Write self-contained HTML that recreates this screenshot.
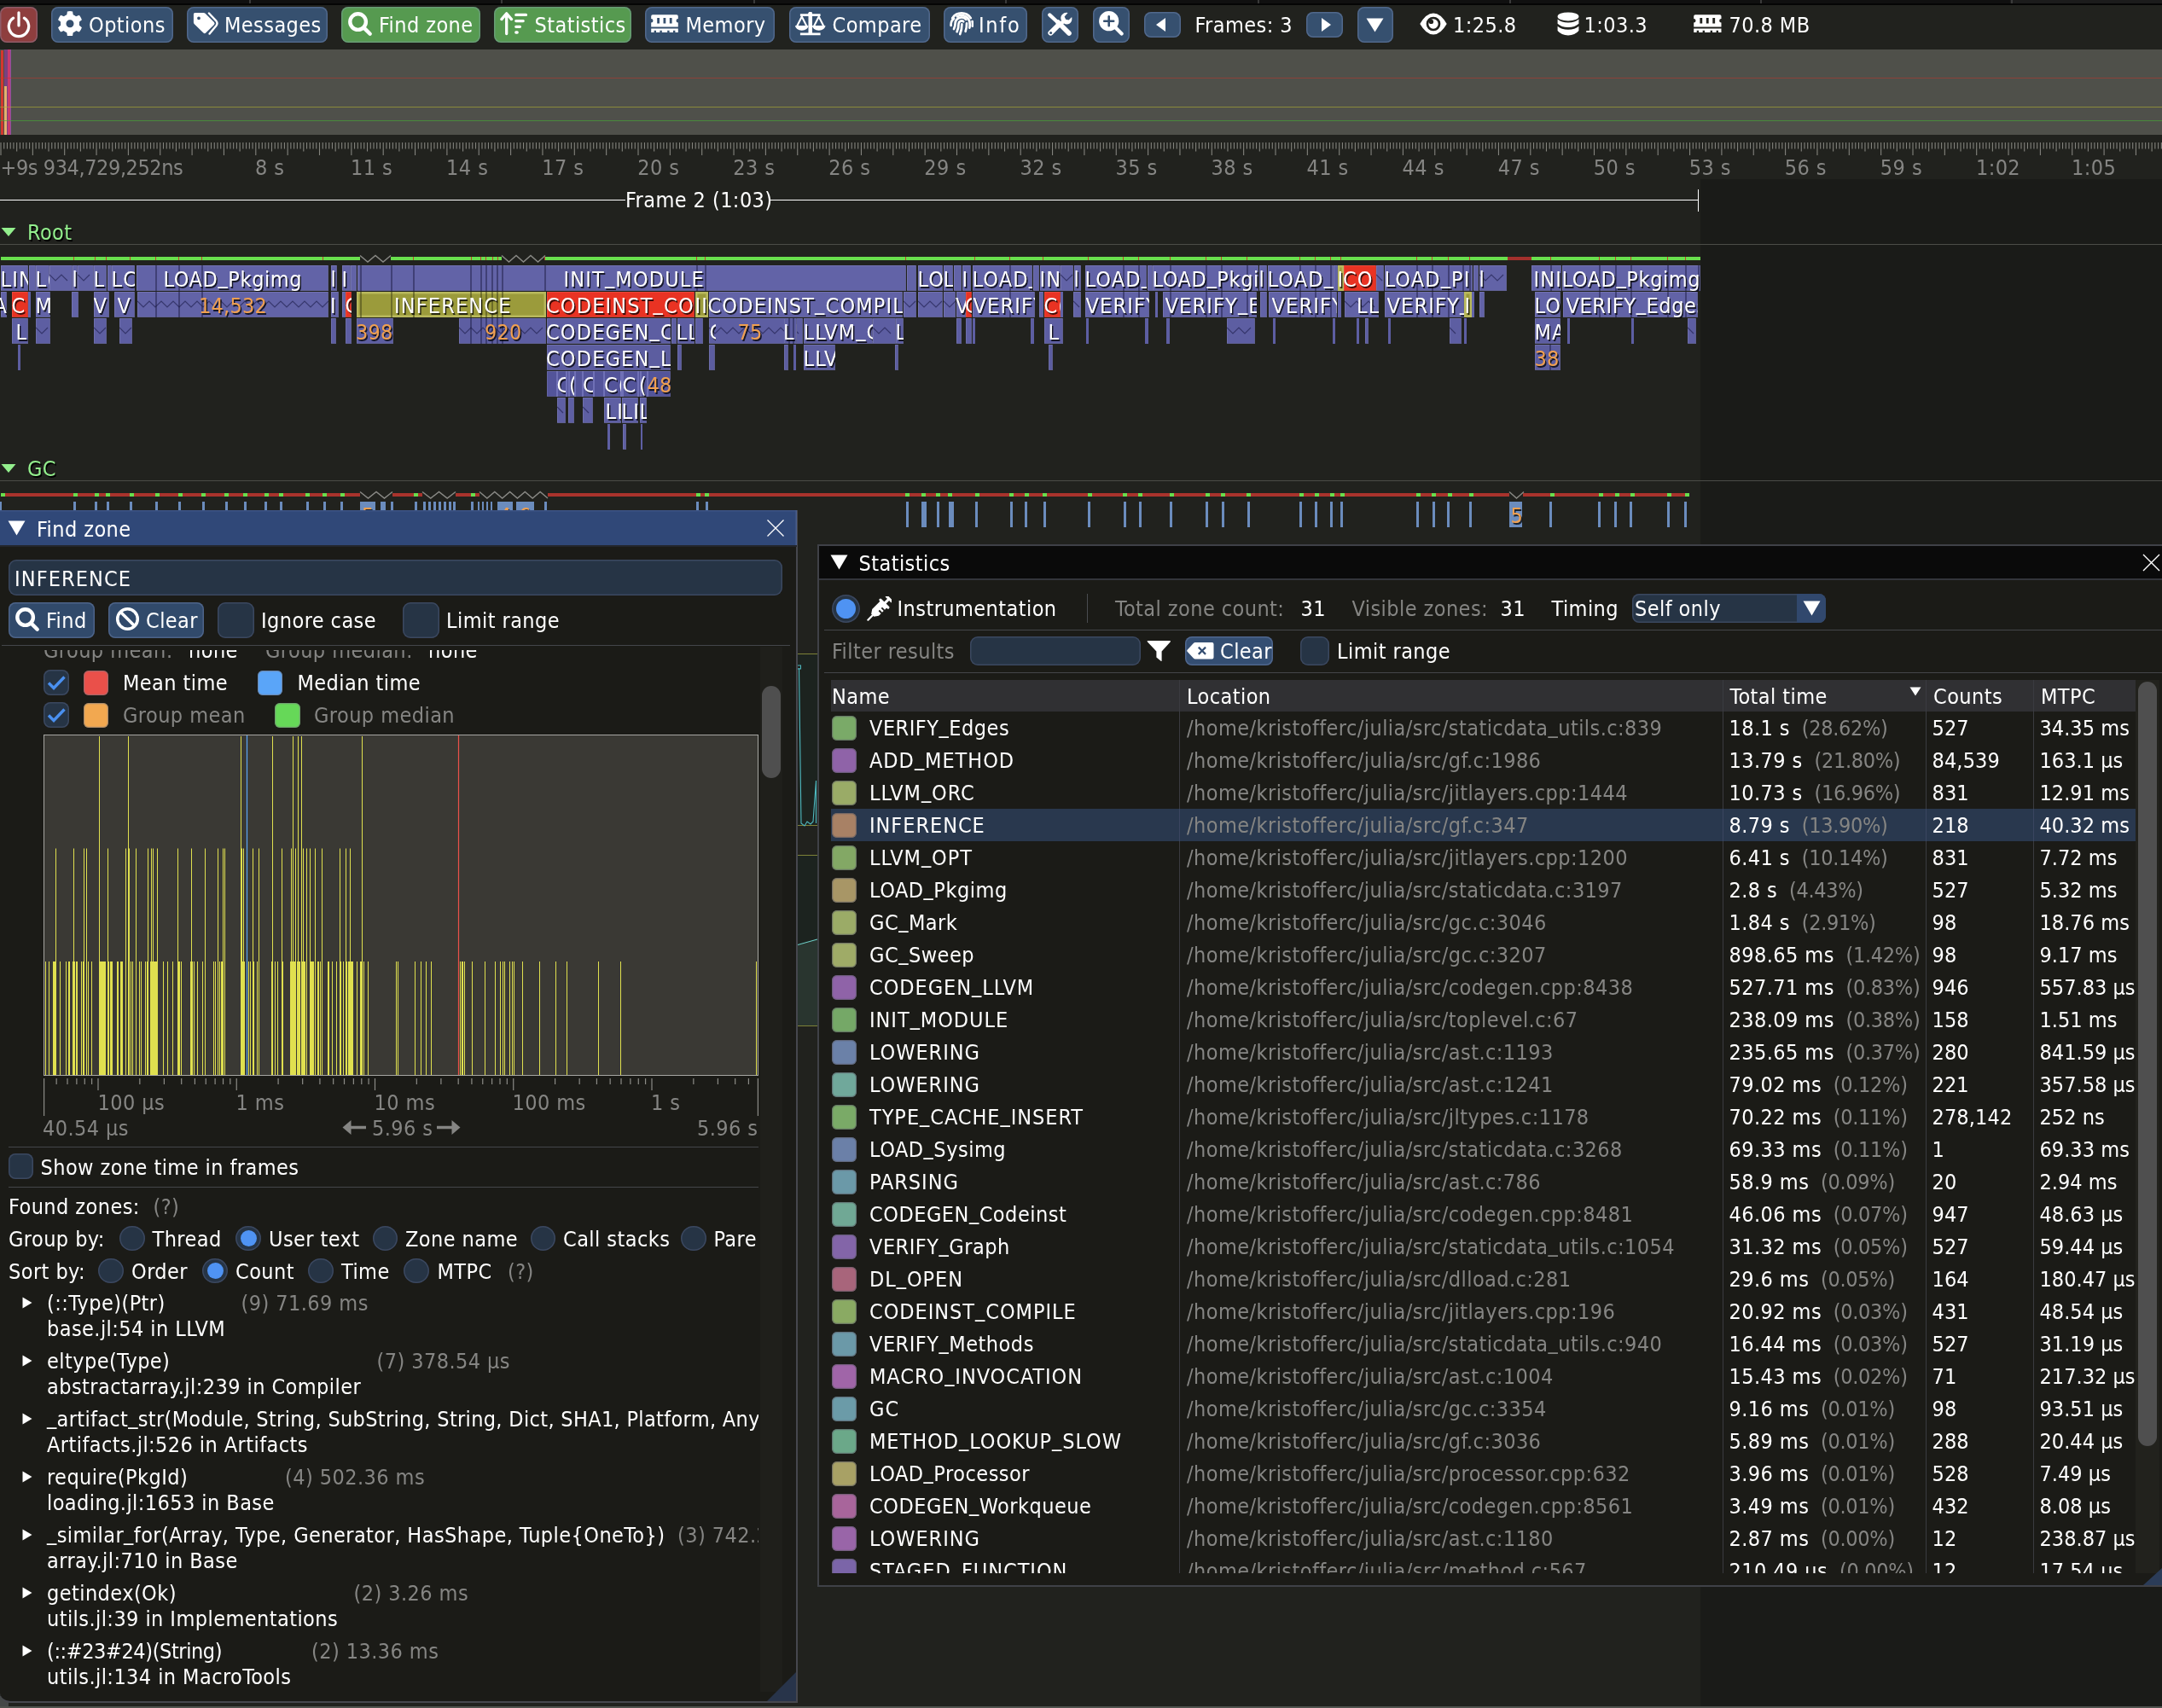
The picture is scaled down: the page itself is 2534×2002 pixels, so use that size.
<!DOCTYPE html>
<html><head><meta charset="utf-8"><title>Tracy Profiler</title>
<style>
html,body{margin:0;padding:0;background:#21221e;}
body{width:2534px;height:2002px;position:relative;overflow:hidden;font-family:"DejaVu Sans Condensed","Liberation Sans",sans-serif;font-size:25.0px;letter-spacing:0.43px;color:#fff;}
body div,body svg{position:absolute;box-sizing:border-box;}
.t{white-space:pre;line-height:30px;height:30px;}
.z{white-space:pre;line-height:30px;height:30px;overflow:hidden;letter-spacing:1.15px;padding-top:0.7px;z-index:2;text-shadow:1.5px 1.5px 0 rgba(0,0,0,0.75);}
.btn{border-radius:8px;box-shadow:inset 0 0 0 1.5px rgba(150,170,215,0.28);}
.clip{overflow:hidden;}
.u{position:relative;top:-3.5px;}
</style></head><body><div id="root" style="left:0;top:0;width:2534px;height:2002px;will-change:transform;">
<div style="left:0px;top:0px;width:2534px;height:5px;background:#101010;"></div>
<div style="left:0px;top:4px;width:2534px;height:1.5px;background:#050505;"></div>
<div style="left:2356px;top:0px;width:178px;height:4px;background:#1c1c1c;"></div>
<div style="left:292px;top:0px;width:1.5px;height:4px;background:#3a3a3a;"></div>
<div style="left:587px;top:0px;width:1.5px;height:4px;background:#3a3a3a;"></div>
<div style="left:883px;top:0px;width:1.5px;height:4px;background:#3a3a3a;"></div>
<div style="left:1178px;top:0px;width:1.5px;height:4px;background:#3a3a3a;"></div>
<div style="left:1474px;top:0px;width:1.5px;height:4px;background:#3a3a3a;"></div>
<div style="left:1769px;top:0px;width:1.5px;height:4px;background:#3a3a3a;"></div>
<div style="left:2063px;top:0px;width:1.5px;height:4px;background:#3a3a3a;"></div>
<div style="left:2357px;top:0px;width:1.5px;height:4px;background:#3a3a3a;"></div>
<div class="btn" style="left:0px;top:8px;width:44px;height:42px;background:#8e3e3e"></div>
<svg style="left:8px;top:13px" width="28" height="32" viewBox="0 0 28 32" preserveAspectRatio="none"><path d="M7.6 8.1 A11.7 11.7 0 1 0 20.4 8.1" fill="none" stroke="#fff" stroke-width="3.2" stroke-linecap="round"/><line x1="14" y1="1.8" x2="14" y2="17" stroke="#fff" stroke-width="3.2" stroke-linecap="round"/></svg>
<div class="btn" style="left:60px;top:8px;width:143px;height:42px;background:#36506f"></div>
<svg style="left:68.3px;top:13px" width="28" height="29.4" viewBox="0 0 28 29.4" preserveAspectRatio="none"><g transform="translate(14,14.7)" fill="#fff"><path d="M-3.9 -9 L-3.1 -14.3 Q0 -14.9 3.1 -14.3 L3.9 -9 Z" transform="rotate(0)"/><path d="M-3.9 -9 L-3.1 -14.3 Q0 -14.9 3.1 -14.3 L3.9 -9 Z" transform="rotate(60)"/><path d="M-3.9 -9 L-3.1 -14.3 Q0 -14.9 3.1 -14.3 L3.9 -9 Z" transform="rotate(120)"/><path d="M-3.9 -9 L-3.1 -14.3 Q0 -14.9 3.1 -14.3 L3.9 -9 Z" transform="rotate(180)"/><path d="M-3.9 -9 L-3.1 -14.3 Q0 -14.9 3.1 -14.3 L3.9 -9 Z" transform="rotate(240)"/><path d="M-3.9 -9 L-3.1 -14.3 Q0 -14.9 3.1 -14.3 L3.9 -9 Z" transform="rotate(300)"/><path fill-rule="evenodd" d="M0 -11 A11 11 0 1 0 0 11 A11 11 0 1 0 0 -11 Z M0 -4.5 A4.5 4.5 0 1 1 0 4.5 A4.5 4.5 0 1 1 0 -4.5 Z"/></g></svg>
<div class="t" style="left:104px;top:15.0px;color:#fff;">Options</div>
<div class="btn" style="left:219px;top:8px;width:165px;height:42px;background:#36506f"></div>
<svg style="left:226px;top:14px" width="30" height="27" viewBox="0 0 30 27" preserveAspectRatio="none"><path fill-rule="evenodd" fill="#fff" d="M0.9 2.6 Q0.9 0.9 2.6 0.9 L12.5 0.9 Q13.7 0.9 14.6 1.8 L24.9 12.1 Q26.3 13.5 24.9 14.9 L15.2 24.6 Q13.8 26 12.4 24.6 L1.8 14.3 Q0.9 13.4 0.9 12.2 Z M7 5.4 A1.9 1.9 0 1 0 7 9.2 A1.9 1.9 0 1 0 7 5.4 Z"/><path fill="none" stroke="#fff" stroke-width="2.4" stroke-linecap="round" stroke-linejoin="round" d="M18.9 1.5 L27.5 10.6 Q29.5 13.4 27.5 16 L19.6 25.6"/></svg>
<div class="t" style="left:263px;top:15.0px;color:#fff;">Messages</div>
<div class="btn" style="left:400px;top:8px;width:163px;height:42px;background:#569a50"></div>
<svg style="left:408px;top:13.5px" width="29" height="29" viewBox="0 0 29 29" preserveAspectRatio="none"><circle cx="11.6" cy="11.6" r="9.3" fill="none" stroke="#fff" stroke-width="4.4"/><line x1="18.6" y1="18.6" x2="25.7" y2="25.7" stroke="#fff" stroke-width="4.4" stroke-linecap="round"/></svg>
<div class="t" style="left:444px;top:15.0px;color:#fff;">Find zone</div>
<div class="btn" style="left:579px;top:8px;width:160.5px;height:42px;background:#569a50"></div>
<svg style="left:586px;top:13px" width="34" height="29" viewBox="0 0 34 29" preserveAspectRatio="none"><path d="M7.7 26.5 V3.2 M1.9 9.6 L7.7 2.8 L13.5 9.6" fill="none" stroke="#fff" stroke-width="3.3" stroke-linecap="round" stroke-linejoin="round"/><path d="M18.8 4.4 H30.5 M18.8 11.6 H27.2 M18.8 18.3 H23.4 M18.8 25 H20.2" stroke="#fff" stroke-width="3.3" stroke-linecap="round"/></svg>
<div class="t" style="left:626.5px;top:15.0px;color:#fff;">Statistics</div>
<div class="btn" style="left:755.5px;top:8px;width:152.5px;height:42px;background:#36506f"></div>
<svg style="left:762.7px;top:16.8px" width="32" height="21.2" viewBox="0 0 32 21.2" preserveAspectRatio="none"><path fill-rule="evenodd" fill="#fff" d="M2 0.2 H30 Q31.8 0.2 31.8 2 V5 A2.3 2.3 0 0 0 31.8 9.6 V14.4 H0.2 V9.6 A2.3 2.3 0 0 0 0.2 5 V2 Q0.2 0.2 2 0.2 Z M7.2 4 V10.4 H10 V4 Z M14.5 4 V10.4 H17.3 V4 Z M21.8 4 V10.4 H24.6 V4 Z"/><path fill="#fff" d="M0.2 16.5 H31.8 V21 H28.4 V18.8 H26 V21 H21.6 V18.8 H19.2 V21 H12.8 V18.8 H10.4 V21 H6 V18.8 H3.6 V21 H0.2 Z"/></svg>
<div class="t" style="left:803.5px;top:15.0px;color:#fff;">Memory</div>
<div class="btn" style="left:924.5px;top:8px;width:165.0px;height:42px;background:#36506f"></div>
<svg style="left:932px;top:14px" width="35.5" height="27.5" viewBox="0 0 35.5 27.5" preserveAspectRatio="none"><path fill="#fff" d="M15.5 1 H20 V2.2 H29.6 V5 H20 V24.4 H29.6 V27.2 H5.9 V24.4 H15.5 V5 H5.9 V2.2 H15.5 Z"/><circle cx="17.75" cy="2" r="2.3" fill="#fff"/><path fill="none" stroke="#fff" stroke-width="2.1" stroke-linejoin="round" d="M7.8 5.6 L2.2 16.4 M7.8 5.6 L13.4 16.4 M27.7 5.6 L22.1 16.4 M27.7 5.6 L33.3 16.4"/><path fill="#fff" d="M0 16 H15.6 A7.8 5.8 0 0 1 0 16 Z M19.9 16 H35.5 A7.8 5.8 0 0 1 19.9 16 Z"/></svg>
<div class="t" style="left:975.5px;top:15.0px;color:#fff;">Compare</div>
<div class="btn" style="left:1105.5px;top:8px;width:98.5px;height:42px;background:#36506f"></div>
<svg style="left:1112.6px;top:13.2px" width="28.5" height="28.5" viewBox="0 0 28.5 28.5" preserveAspectRatio="none"><g fill="none" stroke="#fff" stroke-width="2.7" stroke-linecap="round"><path d="M3.2 8.2 A13 13 0 0 1 24.8 8.2"/><path d="M1.6 17 Q1.2 11.6 5 8.8 M8.8 6.4 A9.8 9.8 0 0 1 23.6 14.6 Q23.8 17.4 23.4 19.6 M26.6 12 Q27.2 14.6 26.8 17.6"/><path d="M5 21 Q6.6 17.6 6.6 14.4 A7.4 7.4 0 0 1 19.4 9.8"/><path d="M20 14.4 Q20.2 19.6 18.6 23.8"/><path d="M8.6 24.2 Q10.6 19.6 10.6 14.6 A3.5 3.5 0 0 1 16.2 12.2"/><path d="M14.4 15.4 Q14.4 21.6 12.2 27"/></g></svg>
<div class="t" style="left:1147px;top:15.0px;color:#fff;letter-spacing:1.7px;">Info</div>
<div class="btn" style="left:1220.5px;top:8px;width:43.5px;height:42px;background:#36506f"></div>
<svg style="left:1227px;top:13.5px" width="31" height="29" viewBox="0 0 31 29" preserveAspectRatio="none"><g stroke="#fff" stroke-linecap="round" fill="none"><path d="M4.4 24.6 L15 14" stroke-width="6"/><path d="M13 12 L26 25" stroke-width="5.6"/><path d="M3.2 3.4 L12.5 12" stroke-width="4.2"/></g><path fill="#fff" d="M24.6 1 L20.6 5.6 L22.2 8.8 L25.6 9.6 L29.2 6 Q30.2 10.8 26.8 13.4 Q23.4 15.4 20 13.6 L14.8 18.6 L11.6 15.4 L17 10.2 Q15.2 6 18 3 Q20.6 0.2 24.6 1 Z"/><circle cx="4.6" cy="24.6" r="1.5" fill="#36506f"/></svg>
<div class="btn" style="left:1280.5px;top:8px;width:43.5px;height:42px;background:#36506f"></div>
<svg style="left:1287.6px;top:13px" width="29" height="29" viewBox="0 0 29 29" preserveAspectRatio="none"><circle cx="11.7" cy="11.7" r="11.6" fill="#fff"/><line x1="18.6" y1="18.6" x2="26.6" y2="26.6" stroke="#fff" stroke-width="4.2" stroke-linecap="round"/><path d="M11.7 6.2 V17.2 M6.2 11.7 H17.2" stroke="#36506f" stroke-width="2.6" stroke-linecap="round"/></svg>
<div class="btn" style="left:1340.5px;top:14px;width:43.5px;height:30px;background:#36506f"></div>
<svg style="left:1354px;top:20px;" width="13" height="18" viewBox="0 0 13 18"><path d="M12 1 V17 L1 9 Z" fill="#fff"/></svg>
<div class="t" style="left:1400.5px;top:15.0px;color:#fff;">Frames: 3</div>
<div class="btn" style="left:1530.5px;top:14px;width:43.5px;height:30px;background:#36506f"></div>
<svg style="left:1548px;top:20px;" width="13" height="18" viewBox="0 0 13 18"><path d="M1 1 V17 L12 9 Z" fill="#fff"/></svg>
<div class="btn" style="left:1590.5px;top:8px;width:42.5px;height:42px;background:#36506f"></div>
<svg style="left:1601px;top:20.5px;" width="21" height="17" viewBox="0 0 21 17"><path d="M0.5 0.5 H20.5 L10.5 16.5 Z" fill="#fff"/></svg>
<svg style="left:1664px;top:14.5px" width="32" height="26" viewBox="0 0 32 26" preserveAspectRatio="none"><path fill="#fff" d="M0.3 13 Q7.5 0.5 16 0.5 Q24.5 0.5 31.7 13 Q24.5 25.5 16 25.5 Q7.5 25.5 0.3 13 Z"/><circle cx="16" cy="13" r="7" fill="none" stroke="#22231f" stroke-width="2.7"/><circle cx="13.4" cy="10.4" r="2.7" fill="#22231f"/></svg>
<div class="t" style="left:1703px;top:15.0px;color:#fff;">1:25.8</div>
<svg style="left:1824.5px;top:13.5px" width="26" height="28" viewBox="0 0 26 28" preserveAspectRatio="none"><g fill="#fff"><ellipse cx="13" cy="5.4" rx="12.4" ry="5"/><path d="M0.6 8.6 Q5 12.6 13 12.6 Q21 12.6 25.4 8.6 V13.8 Q21 18 13 18 Q5 18 0.6 13.8 Z"/><path d="M0.6 16.8 Q5 20.8 13 20.8 Q21 20.8 25.4 16.8 V22 Q21 27.4 13 27.4 Q5 27.4 0.6 22 Z"/></g></svg>
<div class="t" style="left:1856.5px;top:15.0px;color:#fff;">1:03.3</div>
<svg style="left:1985.3px;top:16.8px" width="32.7" height="21.2" viewBox="0 0 32 21.2" preserveAspectRatio="none"><path fill-rule="evenodd" fill="#fff" d="M2 0.2 H30 Q31.8 0.2 31.8 2 V5 A2.3 2.3 0 0 0 31.8 9.6 V14.4 H0.2 V9.6 A2.3 2.3 0 0 0 0.2 5 V2 Q0.2 0.2 2 0.2 Z M7.2 4 V10.4 H10 V4 Z M14.5 4 V10.4 H17.3 V4 Z M21.8 4 V10.4 H24.6 V4 Z"/><path fill="#fff" d="M0.2 16.5 H31.8 V21 H28.4 V18.8 H26 V21 H21.6 V18.8 H19.2 V21 H12.8 V18.8 H10.4 V21 H6 V18.8 H3.6 V21 H0.2 Z"/></svg>
<div class="t" style="left:2026.5px;top:15.0px;color:#fff;">70.8 MB</div>
<div style="left:0px;top:58px;width:2534px;height:100px;background:#4f504a;"></div>
<div style="left:1px;top:59px;width:3.2px;height:98.5px;background:#d3382e;"></div>
<div style="left:5px;top:58px;width:3.7px;height:100px;background:#7a417f;"></div>
<div style="left:5px;top:101px;width:3.2px;height:56.5px;background:#e3b06e;"></div>
<div style="left:9px;top:58px;width:3.6px;height:100px;background:#c93a6f;"></div>
<div style="left:12.4px;top:58px;width:0.6px;height:100px;background:#8a52a0;"></div>
<div style="left:0px;top:91px;width:2534px;height:1px;background:rgba(200,50,40,0.5);"></div>
<div style="left:0px;top:125px;width:2534px;height:1px;background:rgba(175,175,50,0.62);"></div>
<div style="left:0px;top:141px;width:2534px;height:1px;background:rgba(70,175,50,0.62);"></div>
<svg style="left:0px;top:167px;" width="2534" height="16" viewBox="0 0 2534 16"><path d="M1.00 0V15M4.74 0V7.5M8.47 0V7.5M12.21 0V7.5M15.94 0V7.5M19.68 0V10.5M23.41 0V7.5M27.14 0V7.5M30.88 0V7.5M34.62 0V7.5M38.35 0V15M42.09 0V7.5M45.82 0V7.5M49.55 0V7.5M53.29 0V7.5M57.02 0V10.5M60.76 0V7.5M64.50 0V7.5M68.23 0V7.5M71.97 0V7.5M75.70 0V15M79.44 0V7.5M83.17 0V7.5M86.91 0V7.5M90.64 0V7.5M94.38 0V10.5M98.11 0V7.5M101.84 0V7.5M105.58 0V7.5M109.32 0V7.5M113.05 0V15M116.79 0V7.5M120.52 0V7.5M124.25 0V7.5M127.99 0V7.5M131.72 0V10.5M135.46 0V7.5M139.19 0V7.5M142.93 0V7.5M146.67 0V7.5M150.40 0V15M154.14 0V7.5M157.87 0V7.5M161.60 0V7.5M165.34 0V7.5M169.07 0V10.5M172.81 0V7.5M176.55 0V7.5M180.28 0V7.5M184.02 0V7.5M187.75 0V15M191.49 0V7.5M195.22 0V7.5M198.96 0V7.5M202.69 0V7.5M206.43 0V10.5M210.16 0V7.5M213.90 0V7.5M217.63 0V7.5M221.37 0V7.5M225.10 0V15M228.83 0V7.5M232.57 0V7.5M236.31 0V7.5M240.04 0V7.5M243.78 0V10.5M247.51 0V7.5M251.25 0V7.5M254.98 0V7.5M258.72 0V7.5M262.45 0V15M266.19 0V7.5M269.92 0V7.5M273.66 0V7.5M277.39 0V7.5M281.12 0V10.5M284.86 0V7.5M288.60 0V7.5M292.33 0V7.5M296.06 0V7.5M299.80 0V15M303.53 0V7.5M307.27 0V7.5M311.00 0V7.5M314.74 0V7.5M318.48 0V10.5M322.21 0V7.5M325.95 0V7.5M329.68 0V7.5M333.42 0V7.5M337.15 0V15M340.88 0V7.5M344.62 0V7.5M348.36 0V7.5M352.09 0V7.5M355.82 0V10.5M359.56 0V7.5M363.30 0V7.5M367.03 0V7.5M370.76 0V7.5M374.50 0V15M378.24 0V7.5M381.97 0V7.5M385.71 0V7.5M389.44 0V7.5M393.18 0V10.5M396.91 0V7.5M400.65 0V7.5M404.38 0V7.5M408.12 0V7.5M411.85 0V15M415.59 0V7.5M419.32 0V7.5M423.06 0V7.5M426.79 0V7.5M430.52 0V10.5M434.26 0V7.5M438.00 0V7.5M441.73 0V7.5M445.47 0V7.5M449.20 0V15M452.94 0V7.5M456.67 0V7.5M460.41 0V7.5M464.14 0V7.5M467.88 0V10.5M471.61 0V7.5M475.34 0V7.5M479.08 0V7.5M482.82 0V7.5M486.55 0V15M490.29 0V7.5M494.02 0V7.5M497.75 0V7.5M501.49 0V7.5M505.23 0V10.5M508.96 0V7.5M512.69 0V7.5M516.43 0V7.5M520.17 0V7.5M523.90 0V15M527.63 0V7.5M531.37 0V7.5M535.11 0V7.5M538.84 0V7.5M542.58 0V10.5M546.31 0V7.5M550.04 0V7.5M553.78 0V7.5M557.52 0V7.5M561.25 0V15M564.99 0V7.5M568.72 0V7.5M572.46 0V7.5M576.19 0V7.5M579.92 0V10.5M583.66 0V7.5M587.39 0V7.5M591.13 0V7.5M594.87 0V7.5M598.60 0V15M602.34 0V7.5M606.07 0V7.5M609.81 0V7.5M613.54 0V7.5M617.27 0V10.5M621.01 0V7.5M624.75 0V7.5M628.48 0V7.5M632.22 0V7.5M635.95 0V15M639.69 0V7.5M643.42 0V7.5M647.15 0V7.5M650.89 0V7.5M654.62 0V10.5M658.36 0V7.5M662.10 0V7.5M665.83 0V7.5M669.57 0V7.5M673.30 0V15M677.04 0V7.5M680.77 0V7.5M684.50 0V7.5M688.24 0V7.5M691.98 0V10.5M695.71 0V7.5M699.44 0V7.5M703.18 0V7.5M706.92 0V7.5M710.65 0V15M714.38 0V7.5M718.12 0V7.5M721.86 0V7.5M725.59 0V7.5M729.33 0V10.5M733.06 0V7.5M736.80 0V7.5M740.53 0V7.5M744.27 0V7.5M748.00 0V15M751.74 0V7.5M755.47 0V7.5M759.21 0V7.5M762.94 0V7.5M766.67 0V10.5M770.41 0V7.5M774.15 0V7.5M777.88 0V7.5M781.62 0V7.5M785.35 0V15M789.09 0V7.5M792.82 0V7.5M796.56 0V7.5M800.29 0V7.5M804.02 0V10.5M807.76 0V7.5M811.50 0V7.5M815.23 0V7.5M818.97 0V7.5M822.70 0V15M826.44 0V7.5M830.17 0V7.5M833.91 0V7.5M837.64 0V7.5M841.38 0V10.5M845.11 0V7.5M848.85 0V7.5M852.58 0V7.5M856.31 0V7.5M860.05 0V15M863.79 0V7.5M867.52 0V7.5M871.26 0V7.5M874.99 0V7.5M878.73 0V10.5M882.46 0V7.5M886.20 0V7.5M889.93 0V7.5M893.66 0V7.5M897.40 0V15M901.13 0V7.5M904.87 0V7.5M908.61 0V7.5M912.34 0V7.5M916.08 0V10.5M919.81 0V7.5M923.55 0V7.5M927.28 0V7.5M931.01 0V7.5M934.75 0V15M938.49 0V7.5M942.22 0V7.5M945.96 0V7.5M949.69 0V7.5M953.42 0V10.5M957.16 0V7.5M960.90 0V7.5M964.63 0V7.5M968.37 0V7.5M972.10 0V15M975.84 0V7.5M979.57 0V7.5M983.31 0V7.5M987.04 0V7.5M990.77 0V10.5M994.51 0V7.5M998.25 0V7.5M1001.98 0V7.5M1005.71 0V7.5M1009.45 0V15M1013.19 0V7.5M1016.92 0V7.5M1020.66 0V7.5M1024.39 0V7.5M1028.12 0V10.5M1031.86 0V7.5M1035.60 0V7.5M1039.33 0V7.5M1043.07 0V7.5M1046.80 0V15M1050.54 0V7.5M1054.27 0V7.5M1058.01 0V7.5M1061.74 0V7.5M1065.47 0V10.5M1069.21 0V7.5M1072.95 0V7.5M1076.68 0V7.5M1080.41 0V7.5M1084.15 0V15M1087.88 0V7.5M1091.62 0V7.5M1095.36 0V7.5M1099.09 0V7.5M1102.83 0V10.5M1106.56 0V7.5M1110.30 0V7.5M1114.03 0V7.5M1117.76 0V7.5M1121.50 0V15M1125.24 0V7.5M1128.97 0V7.5M1132.71 0V7.5M1136.44 0V7.5M1140.17 0V10.5M1143.91 0V7.5M1147.64 0V7.5M1151.38 0V7.5M1155.12 0V7.5M1158.85 0V15M1162.59 0V7.5M1166.32 0V7.5M1170.06 0V7.5M1173.79 0V7.5M1177.53 0V10.5M1181.26 0V7.5M1185.00 0V7.5M1188.73 0V7.5M1192.46 0V7.5M1196.20 0V15M1199.93 0V7.5M1203.67 0V7.5M1207.41 0V7.5M1211.14 0V7.5M1214.88 0V10.5M1218.61 0V7.5M1222.35 0V7.5M1226.08 0V7.5M1229.82 0V7.5M1233.55 0V15M1237.29 0V7.5M1241.02 0V7.5M1244.76 0V7.5M1248.49 0V7.5M1252.22 0V10.5M1255.96 0V7.5M1259.70 0V7.5M1263.43 0V7.5M1267.16 0V7.5M1270.90 0V15M1274.63 0V7.5M1278.37 0V7.5M1282.11 0V7.5M1285.84 0V7.5M1289.58 0V10.5M1293.31 0V7.5M1297.05 0V7.5M1300.78 0V7.5M1304.51 0V7.5M1308.25 0V15M1311.99 0V7.5M1315.72 0V7.5M1319.46 0V7.5M1323.19 0V7.5M1326.92 0V10.5M1330.66 0V7.5M1334.39 0V7.5M1338.13 0V7.5M1341.87 0V7.5M1345.60 0V15M1349.34 0V7.5M1353.07 0V7.5M1356.81 0V7.5M1360.54 0V7.5M1364.28 0V10.5M1368.01 0V7.5M1371.75 0V7.5M1375.48 0V7.5M1379.21 0V7.5M1382.95 0V15M1386.68 0V7.5M1390.42 0V7.5M1394.16 0V7.5M1397.89 0V7.5M1401.62 0V10.5M1405.36 0V7.5M1409.10 0V7.5M1412.83 0V7.5M1416.57 0V7.5M1420.30 0V15M1424.04 0V7.5M1427.77 0V7.5M1431.51 0V7.5M1435.24 0V7.5M1438.97 0V10.5M1442.71 0V7.5M1446.45 0V7.5M1450.18 0V7.5M1453.92 0V7.5M1457.65 0V15M1461.38 0V7.5M1465.12 0V7.5M1468.86 0V7.5M1472.59 0V7.5M1476.33 0V10.5M1480.06 0V7.5M1483.80 0V7.5M1487.53 0V7.5M1491.27 0V7.5M1495.00 0V15M1498.74 0V7.5M1502.47 0V7.5M1506.21 0V7.5M1509.94 0V7.5M1513.67 0V10.5M1517.41 0V7.5M1521.14 0V7.5M1524.88 0V7.5M1528.62 0V7.5M1532.35 0V15M1536.09 0V7.5M1539.82 0V7.5M1543.56 0V7.5M1547.29 0V7.5M1551.03 0V10.5M1554.76 0V7.5M1558.50 0V7.5M1562.23 0V7.5M1565.97 0V7.5M1569.70 0V15M1573.43 0V7.5M1577.17 0V7.5M1580.91 0V7.5M1584.64 0V7.5M1588.38 0V10.5M1592.11 0V7.5M1595.85 0V7.5M1599.58 0V7.5M1603.32 0V7.5M1607.05 0V15M1610.79 0V7.5M1614.52 0V7.5M1618.26 0V7.5M1621.99 0V7.5M1625.72 0V10.5M1629.46 0V7.5M1633.20 0V7.5M1636.93 0V7.5M1640.67 0V7.5M1644.40 0V15M1648.14 0V7.5M1651.87 0V7.5M1655.61 0V7.5M1659.34 0V7.5M1663.08 0V10.5M1666.81 0V7.5M1670.55 0V7.5M1674.28 0V7.5M1678.02 0V7.5M1681.75 0V15M1685.49 0V7.5M1689.22 0V7.5M1692.95 0V7.5M1696.69 0V7.5M1700.42 0V10.5M1704.16 0V7.5M1707.89 0V7.5M1711.63 0V7.5M1715.37 0V7.5M1719.10 0V15M1722.84 0V7.5M1726.57 0V7.5M1730.30 0V7.5M1734.04 0V7.5M1737.78 0V10.5M1741.51 0V7.5M1745.25 0V7.5M1748.98 0V7.5M1752.72 0V7.5M1756.45 0V15M1760.19 0V7.5M1763.92 0V7.5M1767.65 0V7.5M1771.39 0V7.5M1775.12 0V10.5M1778.86 0V7.5M1782.60 0V7.5M1786.33 0V7.5M1790.07 0V7.5M1793.80 0V15M1797.54 0V7.5M1801.27 0V7.5M1805.00 0V7.5M1808.74 0V7.5M1812.47 0V10.5M1816.21 0V7.5M1819.95 0V7.5M1823.68 0V7.5M1827.42 0V7.5M1831.15 0V15M1834.89 0V7.5M1838.62 0V7.5M1842.36 0V7.5M1846.09 0V7.5M1849.83 0V10.5M1853.56 0V7.5M1857.30 0V7.5M1861.03 0V7.5M1864.77 0V7.5M1868.50 0V15M1872.24 0V7.5M1875.97 0V7.5M1879.70 0V7.5M1883.44 0V7.5M1887.17 0V10.5M1890.91 0V7.5M1894.64 0V7.5M1898.38 0V7.5M1902.12 0V7.5M1905.85 0V15M1909.59 0V7.5M1913.32 0V7.5M1917.05 0V7.5M1920.79 0V7.5M1924.53 0V10.5M1928.26 0V7.5M1932.00 0V7.5M1935.73 0V7.5M1939.47 0V7.5M1943.20 0V15M1946.94 0V7.5M1950.67 0V7.5M1954.40 0V7.5M1958.14 0V7.5M1961.88 0V10.5M1965.61 0V7.5M1969.35 0V7.5M1973.08 0V7.5M1976.82 0V7.5M1980.55 0V15M1984.29 0V7.5M1988.02 0V7.5M1991.75 0V7.5M1995.49 0V7.5M1999.22 0V10.5M2002.96 0V7.5M2006.70 0V7.5M2010.43 0V7.5M2014.17 0V7.5M2017.90 0V15M2021.64 0V7.5M2025.37 0V7.5M2029.11 0V7.5M2032.84 0V7.5M2036.58 0V10.5M2040.31 0V7.5M2044.05 0V7.5M2047.78 0V7.5M2051.52 0V7.5M2055.25 0V15M2058.99 0V7.5M2062.72 0V7.5M2066.45 0V7.5M2070.19 0V7.5M2073.93 0V10.5M2077.66 0V7.5M2081.39 0V7.5M2085.13 0V7.5M2088.87 0V7.5M2092.60 0V15M2096.34 0V7.5M2100.07 0V7.5M2103.80 0V7.5M2107.54 0V7.5M2111.28 0V10.5M2115.01 0V7.5M2118.74 0V7.5M2122.48 0V7.5M2126.22 0V7.5M2129.95 0V15M2133.69 0V7.5M2137.42 0V7.5M2141.15 0V7.5M2144.89 0V7.5M2148.62 0V10.5M2152.36 0V7.5M2156.10 0V7.5M2159.83 0V7.5M2163.57 0V7.5M2167.30 0V15M2171.04 0V7.5M2174.77 0V7.5M2178.51 0V7.5M2182.24 0V7.5M2185.97 0V10.5M2189.71 0V7.5M2193.45 0V7.5M2197.18 0V7.5M2200.91 0V7.5M2204.65 0V15M2208.39 0V7.5M2212.12 0V7.5M2215.86 0V7.5M2219.59 0V7.5M2223.32 0V10.5M2227.06 0V7.5M2230.80 0V7.5M2234.53 0V7.5M2238.27 0V7.5M2242.00 0V15M2245.74 0V7.5M2249.47 0V7.5M2253.20 0V7.5M2256.94 0V7.5M2260.68 0V10.5M2264.41 0V7.5M2268.14 0V7.5M2271.88 0V7.5M2275.62 0V7.5M2279.35 0V15M2283.09 0V7.5M2286.82 0V7.5M2290.55 0V7.5M2294.29 0V7.5M2298.03 0V10.5M2301.76 0V7.5M2305.49 0V7.5M2309.23 0V7.5M2312.97 0V7.5M2316.70 0V15M2320.44 0V7.5M2324.17 0V7.5M2327.90 0V7.5M2331.64 0V7.5M2335.38 0V10.5M2339.11 0V7.5M2342.85 0V7.5M2346.58 0V7.5M2350.32 0V7.5M2354.05 0V15M2357.79 0V7.5M2361.52 0V7.5M2365.26 0V7.5M2368.99 0V7.5M2372.72 0V10.5M2376.46 0V7.5M2380.20 0V7.5M2383.93 0V7.5M2387.66 0V7.5M2391.40 0V15M2395.14 0V7.5M2398.87 0V7.5M2402.61 0V7.5M2406.34 0V7.5M2410.07 0V10.5M2413.81 0V7.5M2417.55 0V7.5M2421.28 0V7.5M2425.02 0V7.5M2428.75 0V15M2432.49 0V7.5M2436.22 0V7.5M2439.95 0V7.5M2443.69 0V7.5M2447.43 0V10.5M2451.16 0V7.5M2454.89 0V7.5M2458.63 0V7.5M2462.37 0V7.5M2466.10 0V15M2469.84 0V7.5M2473.57 0V7.5M2477.30 0V7.5M2481.04 0V7.5M2484.78 0V10.5M2488.51 0V7.5M2492.24 0V7.5M2495.98 0V7.5M2499.72 0V7.5M2503.45 0V15M2507.19 0V7.5M2510.92 0V7.5M2514.65 0V7.5M2518.39 0V7.5M2522.12 0V10.5M2525.86 0V7.5M2529.60 0V7.5M2533.33 0V7.5" stroke="#83837d" stroke-width="1.1" fill="none"/></svg>
<div class="t" style="left:0.5px;top:181.6px;color:#858583;letter-spacing:-0.42px;">+9s 934,729,252ns</div>
<div class="t" style="left:299.0px;top:181.6px;color:#858583;">8 s</div>
<div class="t" style="left:411.05px;top:181.6px;color:#858583;">11 s</div>
<div class="t" style="left:523.1px;top:181.6px;color:#858583;">14 s</div>
<div class="t" style="left:635.15px;top:181.6px;color:#858583;">17 s</div>
<div class="t" style="left:747.2px;top:181.6px;color:#858583;">20 s</div>
<div class="t" style="left:859.25px;top:181.6px;color:#858583;">23 s</div>
<div class="t" style="left:971.3px;top:181.6px;color:#858583;">26 s</div>
<div class="t" style="left:1083.35px;top:181.6px;color:#858583;">29 s</div>
<div class="t" style="left:1195.4px;top:181.6px;color:#858583;">32 s</div>
<div class="t" style="left:1307.4499999999998px;top:181.6px;color:#858583;">35 s</div>
<div class="t" style="left:1419.5px;top:181.6px;color:#858583;">38 s</div>
<div class="t" style="left:1531.55px;top:181.6px;color:#858583;">41 s</div>
<div class="t" style="left:1643.6px;top:181.6px;color:#858583;">44 s</div>
<div class="t" style="left:1755.6499999999999px;top:181.6px;color:#858583;">47 s</div>
<div class="t" style="left:1867.7px;top:181.6px;color:#858583;">50 s</div>
<div class="t" style="left:1979.75px;top:181.6px;color:#858583;">53 s</div>
<div class="t" style="left:2091.8px;top:181.6px;color:#858583;">56 s</div>
<div class="t" style="left:2203.85px;top:181.6px;color:#858583;">59 s</div>
<div class="t" style="left:2315.8999999999996px;top:181.6px;color:#858583;">1:02</div>
<div class="t" style="left:2427.95px;top:181.6px;color:#858583;">1:05</div>
<div style="left:1993px;top:210px;width:541px;height:1792px;background:#1a1b18;"></div>
<div style="left:0px;top:233.7px;width:732.5px;height:1.6px;background:#fff;"></div>
<div style="left:901px;top:233.7px;width:1089px;height:1.6px;background:#fff;"></div>
<div style="left:1989.5px;top:222px;width:1.6px;height:26px;background:#fff;"></div>
<div class="t" style="left:733px;top:220.0px;color:#fff;">Frame 2 (1:03)</div>
<svg style="left:1px;top:265.5px;" width="18" height="12" viewBox="0 0 18 12"><path d="M0.5 1 H17.5 L9 11 Z" fill="#93ef8d"/></svg>
<div class="t" style="left:32px;top:257.5px;color:#93ef8d;text-shadow:1.5px 1.5px 0 #000">Root</div>
<div style="left:0px;top:285.7px;width:2534px;height:1.2px;background:#4b4c47;"></div>
<svg style="left:1px;top:543px;" width="18" height="12" viewBox="0 0 18 12"><path d="M0.5 1 H17.5 L9 11 Z" fill="#93ef8d"/></svg>
<div class="t" style="left:32px;top:535px;color:#93ef8d;text-shadow:1.5px 1.5px 0 #000">GC</div>
<div style="left:0px;top:563.2px;width:2534px;height:1.2px;background:#4b4c47;"></div>
<div style="left:0;top:0;width:2534px;height:640px;z-index:0">
<div style="left:1px;top:301px;width:421px;height:4px;background:#69df4d;"></div>
<div style="left:458px;top:301px;width:130px;height:4px;background:#69df4d;"></div>
<div style="left:639px;top:301px;width:1128px;height:4px;background:#69df4d;"></div>
<div style="left:1795px;top:301px;width:198px;height:4px;background:#69df4d;"></div>
<div style="left:1767px;top:301px;width:28px;height:4px;background:#a4302c;"></div>
<svg style="left:0;top:0" width="2534" height="640"><polyline points="422.0,299.5 431.0,307.0 440.0,299.5 449.0,307.0 458.0,299.5" fill="none" stroke="#8a8a86" stroke-width="1.4"/></svg>
<svg style="left:0;top:0" width="2534" height="640"><polyline points="588.0,299.5 596.5,307.0 605.0,299.5 613.5,307.0 622.0,299.5 630.5,307.0 639.0,299.5" fill="none" stroke="#8a8a86" stroke-width="1.4"/></svg>
<div style="left:86px;top:301px;width:1.2px;height:4px;background:#c0402c;"></div>
<div style="left:111px;top:301px;width:1.2px;height:4px;background:#c0402c;"></div>
<div style="left:124px;top:301px;width:1.2px;height:4px;background:#c0402c;"></div>
<div style="left:152px;top:301px;width:1.2px;height:4px;background:#c0402c;"></div>
<div style="left:182px;top:301px;width:1.2px;height:4px;background:#c0402c;"></div>
<div style="left:209px;top:301px;width:1.2px;height:4px;background:#c0402c;"></div>
<div style="left:236px;top:301px;width:1.2px;height:4px;background:#c0402c;"></div>
<div style="left:378px;top:301px;width:1.2px;height:4px;background:#c0402c;"></div>
<div style="left:484px;top:301px;width:1.2px;height:4px;background:#c0402c;"></div>
<div style="left:551.5px;top:301px;width:1.2px;height:4px;background:#c0402c;"></div>
<div style="left:563px;top:301px;width:1.2px;height:4px;background:#c0402c;"></div>
<div style="left:569px;top:301px;width:1.2px;height:4px;background:#c0402c;"></div>
<div style="left:576.5px;top:301px;width:1.2px;height:4px;background:#c0402c;"></div>
<div style="left:583px;top:301px;width:1.2px;height:4px;background:#c0402c;"></div>
<div style="left:638px;top:301px;width:1.2px;height:4px;background:#c0402c;"></div>
<div style="left:816px;top:301px;width:1.2px;height:4px;background:#c0402c;"></div>
<div style="left:826px;top:301px;width:1.2px;height:4px;background:#c0402c;"></div>
<div style="left:1061px;top:301px;width:1.2px;height:4px;background:#c0402c;"></div>
<div style="left:1142px;top:301px;width:1.2px;height:4px;background:#c0402c;"></div>
<div style="left:1183px;top:301px;width:1.2px;height:4px;background:#c0402c;"></div>
<div style="left:1222px;top:301px;width:1.2px;height:4px;background:#c0402c;"></div>
<div style="left:1275px;top:301px;width:1.2px;height:4px;background:#c0402c;"></div>
<div style="left:1316px;top:301px;width:1.2px;height:4px;background:#c0402c;"></div>
<div style="left:1334px;top:301px;width:1.2px;height:4px;background:#c0402c;"></div>
<div style="left:1371px;top:301px;width:1.2px;height:4px;background:#c0402c;"></div>
<div style="left:1413px;top:301px;width:1.2px;height:4px;background:#c0402c;"></div>
<div style="left:1431px;top:301px;width:1.2px;height:4px;background:#c0402c;"></div>
<div style="left:1461px;top:301px;width:1.2px;height:4px;background:#c0402c;"></div>
<div style="left:1523px;top:301px;width:1.2px;height:4px;background:#c0402c;"></div>
<div style="left:1541px;top:301px;width:1.2px;height:4px;background:#c0402c;"></div>
<div style="left:1559px;top:301px;width:1.2px;height:4px;background:#c0402c;"></div>
<div style="left:1571px;top:301px;width:1.2px;height:4px;background:#c0402c;"></div>
<div style="left:1660px;top:301px;width:1.2px;height:4px;background:#c0402c;"></div>
<div style="left:1678px;top:301px;width:1.2px;height:4px;background:#c0402c;"></div>
<div style="left:1697px;top:301px;width:1.2px;height:4px;background:#c0402c;"></div>
<div style="left:1722px;top:301px;width:1.2px;height:4px;background:#c0402c;"></div>
<div style="left:1817px;top:301px;width:1.2px;height:4px;background:#c0402c;"></div>
<div style="left:1874px;top:301px;width:1.2px;height:4px;background:#c0402c;"></div>
<div style="left:1893px;top:301px;width:1.2px;height:4px;background:#c0402c;"></div>
<div style="left:1911px;top:301px;width:1.2px;height:4px;background:#c0402c;"></div>
<div style="left:1954px;top:301px;width:1.2px;height:4px;background:#c0402c;"></div>
<div style="left:1975px;top:301px;width:1.2px;height:4px;background:#c0402c;"></div>
<div style="left:1px;top:311px;width:32px;height:30px;background:#6263a7;box-shadow:inset 0 0 0 1px rgba(255,255,255,0.10),inset -1px -1px 0 rgba(0,0,0,0.18);"></div>
<div class="z" style="left:0.5px;top:312px;width:32.5px;color:#fff">LIN</div>
<div style="left:33.5px;top:311px;width:8.0px;height:30px;background:#6263a7;box-shadow:inset 0 0 0 1px rgba(255,255,255,0.10),inset -1px -1px 0 rgba(0,0,0,0.18);"></div>
<div style="left:42px;top:311px;width:16px;height:30px;background:#6263a7;box-shadow:inset 0 0 0 1px rgba(255,255,255,0.10),inset -1px -1px 0 rgba(0,0,0,0.18);"></div>
<div class="z" style="left:41.5px;top:312px;width:16.5px;color:#fff">L(</div>
<div style="left:58px;top:311px;width:27px;height:30px;background:#6263a7;box-shadow:inset 0 0 0 1px rgba(255,255,255,0.10),inset -1px -1px 0 rgba(0,0,0,0.18);"></div>
<svg style="left:58px;top:311px" width="27" height="30"><polyline points="0.0,11 7.0,18 14.0,11 21.0,18" fill="none" stroke="rgba(40,40,90,0.75)" stroke-width="1.2"/></svg>
<div style="left:85px;top:311px;width:6px;height:30px;background:#6263a7;box-shadow:inset 0 0 0 1px rgba(255,255,255,0.10),inset -1px -1px 0 rgba(0,0,0,0.18);"></div>
<div class="z" style="left:84.5px;top:312px;width:6.5px;color:#fff;letter-spacing:0.6px">l</div>
<div style="left:91px;top:311px;width:19px;height:30px;background:#6263a7;box-shadow:inset 0 0 0 1px rgba(255,255,255,0.10),inset -1px -1px 0 rgba(0,0,0,0.18);"></div>
<svg style="left:91px;top:311px" width="19" height="30"><polyline points="0.0,11 7.0,18 14.0,11" fill="none" stroke="rgba(40,40,90,0.75)" stroke-width="1.2"/></svg>
<div style="left:110px;top:311px;width:15px;height:30px;background:#6263a7;box-shadow:inset 0 0 0 1px rgba(255,255,255,0.10),inset -1px -1px 0 rgba(0,0,0,0.18);"></div>
<div class="z" style="left:109.5px;top:312px;width:15.5px;color:#fff">L(</div>
<div style="left:125.5px;top:311px;width:5.5px;height:30px;background:#6263a7;box-shadow:inset 0 0 0 1px rgba(255,255,255,0.10),inset -1px -1px 0 rgba(0,0,0,0.18);"></div>
<div style="left:131px;top:311px;width:27px;height:30px;background:#6263a7;box-shadow:inset 0 0 0 1px rgba(255,255,255,0.10),inset -1px -1px 0 rgba(0,0,0,0.18);"></div>
<div class="z" style="left:130.5px;top:312px;width:27.5px;color:#fff">LC</div>
<div style="left:160px;top:311px;width:225px;height:30px;background:#6263a7;box-shadow:inset 0 0 0 1px rgba(255,255,255,0.10),inset -1px -1px 0 rgba(0,0,0,0.18);"></div>
<div style="left:181.5px;top:311px;width:2px;height:30px;background:rgba(30,30,70,0.5);"></div>
<div style="left:208.5px;top:311px;width:2px;height:30px;background:rgba(30,30,70,0.5);"></div>
<div style="left:235.5px;top:311px;width:2px;height:30px;background:rgba(30,30,70,0.5);"></div>
<div class="z" style="left:191.5px;top:312px;width:180px;color:#fff;letter-spacing:0.6px">LOAD<span class="u">_</span>Pkgimg</div>
<div style="left:388px;top:311px;width:7px;height:30px;background:#6263a7;box-shadow:inset 0 0 0 1px rgba(255,255,255,0.10),inset -1px -1px 0 rgba(0,0,0,0.18);"></div>
<div class="z" style="left:387.5px;top:312px;width:7.5px;color:#fff;letter-spacing:0.6px">l</div>
<div style="left:401px;top:311px;width:9.5px;height:30px;background:#6263a7;box-shadow:inset 0 0 0 1px rgba(255,255,255,0.10),inset -1px -1px 0 rgba(0,0,0,0.18);"></div>
<div class="z" style="left:400.5px;top:312px;width:10.0px;color:#fff">I</div>
<div style="left:411px;top:311px;width:6.5px;height:30px;background:#6263a7;box-shadow:inset 0 0 0 1px rgba(255,255,255,0.10),inset -1px -1px 0 rgba(0,0,0,0.18);"></div>
<div style="left:418.5px;top:311px;width:643.5px;height:30px;background:#6263a7;box-shadow:inset 0 0 0 1px rgba(255,255,255,0.10),inset -1px -1px 0 rgba(0,0,0,0.18);"></div>
<div style="left:421.5px;top:311px;width:2px;height:30px;background:rgba(30,30,70,0.5);"></div>
<div style="left:457.5px;top:311px;width:2px;height:30px;background:rgba(30,30,70,0.5);"></div>
<div style="left:483.5px;top:311px;width:2px;height:30px;background:rgba(30,30,70,0.5);"></div>
<div style="left:550.5px;top:311px;width:2px;height:30px;background:rgba(30,30,70,0.5);"></div>
<div style="left:562.5px;top:311px;width:2px;height:30px;background:rgba(30,30,70,0.5);"></div>
<div style="left:568.5px;top:311px;width:2px;height:30px;background:rgba(30,30,70,0.5);"></div>
<div style="left:575.5px;top:311px;width:2px;height:30px;background:rgba(30,30,70,0.5);"></div>
<div style="left:581.5px;top:311px;width:2px;height:30px;background:rgba(30,30,70,0.5);"></div>
<div style="left:587.5px;top:311px;width:2px;height:30px;background:rgba(30,30,70,0.5);"></div>
<div style="left:637.5px;top:311px;width:2px;height:30px;background:rgba(30,30,70,0.5);"></div>
<div style="left:815.5px;top:311px;width:2px;height:30px;background:rgba(30,30,70,0.5);"></div>
<div style="left:825.5px;top:311px;width:2px;height:30px;background:rgba(30,30,70,0.5);"></div>
<div class="z" style="left:660.5px;top:312px;width:200px;color:#fff">INIT<span class="u">_</span>MODULE</div>
<div style="left:1063px;top:311px;width:11px;height:30px;background:#6263a7;box-shadow:inset 0 0 0 1px rgba(255,255,255,0.10),inset -1px -1px 0 rgba(0,0,0,0.18);"></div>
<div style="left:1076px;top:311px;width:29px;height:30px;background:#6263a7;box-shadow:inset 0 0 0 1px rgba(255,255,255,0.10),inset -1px -1px 0 rgba(0,0,0,0.18);"></div>
<div class="z" style="left:1075.5px;top:312px;width:29.5px;color:#fff">LO</div>
<div style="left:1106px;top:311px;width:11px;height:30px;background:#6263a7;box-shadow:inset 0 0 0 1px rgba(255,255,255,0.10),inset -1px -1px 0 rgba(0,0,0,0.18);"></div>
<div class="z" style="left:1105.5px;top:312px;width:11.5px;color:#fff">L(</div>
<div style="left:1118px;top:311px;width:9px;height:30px;background:#6263a7;box-shadow:inset 0 0 0 1px rgba(255,255,255,0.10),inset -1px -1px 0 rgba(0,0,0,0.18);"></div>
<div style="left:1128px;top:311px;width:10px;height:30px;background:#6263a7;box-shadow:inset 0 0 0 1px rgba(255,255,255,0.10),inset -1px -1px 0 rgba(0,0,0,0.18);"></div>
<div class="z" style="left:1127.5px;top:312px;width:10.5px;color:#fff">I</div>
<div style="left:1140px;top:311px;width:70px;height:30px;background:#6263a7;box-shadow:inset 0 0 0 1px rgba(255,255,255,0.10),inset -1px -1px 0 rgba(0,0,0,0.18);"></div>
<div class="z" style="left:1139.5px;top:312px;width:70.5px;color:#fff">LOAD<span class="u">_</span></div>
<div style="left:1182.5px;top:311px;width:2px;height:30px;background:rgba(30,30,70,0.5);"></div>
<div style="left:1211px;top:311px;width:7px;height:30px;background:#6263a7;box-shadow:inset 0 0 0 1px rgba(255,255,255,0.10),inset -1px -1px 0 rgba(0,0,0,0.18);"></div>
<div style="left:1219px;top:311px;width:24px;height:30px;background:#6263a7;box-shadow:inset 0 0 0 1px rgba(255,255,255,0.10),inset -1px -1px 0 rgba(0,0,0,0.18);"></div>
<div class="z" style="left:1218.5px;top:312px;width:24.5px;color:#fff">IN</div>
<div style="left:1243px;top:311px;width:15px;height:30px;background:#6263a7;box-shadow:inset 0 0 0 1px rgba(255,255,255,0.10),inset -1px -1px 0 rgba(0,0,0,0.18);"></div>
<svg style="left:1243px;top:311px" width="15" height="30"><polyline points="0.0,11 7.0,18 14.0,11" fill="none" stroke="rgba(40,40,90,0.75)" stroke-width="1.2"/></svg>
<div style="left:1259px;top:311px;width:8px;height:30px;background:#6263a7;box-shadow:inset 0 0 0 1px rgba(255,255,255,0.10),inset -1px -1px 0 rgba(0,0,0,0.18);"></div>
<div class="z" style="left:1258.5px;top:312px;width:8.5px;color:#fff;letter-spacing:0.6px">l</div>
<div style="left:1271.5px;top:311px;width:72.5px;height:30px;background:#6263a7;box-shadow:inset 0 0 0 1px rgba(255,255,255,0.10),inset -1px -1px 0 rgba(0,0,0,0.18);"></div>
<div class="z" style="left:1271.5px;top:312px;width:72.5px;color:#fff">LOAD<span class="u">_</span></div>
<div style="left:1315.5px;top:311px;width:2px;height:30px;background:rgba(30,30,70,0.5);"></div>
<div style="left:1333.5px;top:311px;width:2px;height:30px;background:rgba(30,30,70,0.5);"></div>
<div style="left:1345px;top:311px;width:5.5px;height:30px;background:#6263a7;box-shadow:inset 0 0 0 1px rgba(255,255,255,0.10),inset -1px -1px 0 rgba(0,0,0,0.18);"></div>
<div style="left:1351px;top:311px;width:124px;height:30px;background:#6263a7;box-shadow:inset 0 0 0 1px rgba(255,255,255,0.10),inset -1px -1px 0 rgba(0,0,0,0.18);"></div>
<div class="z" style="left:1350.5px;top:312px;width:124.5px;color:#fff;letter-spacing:0.6px">LOAD<span class="u">_</span>Pkgi</div>
<div style="left:1370.5px;top:311px;width:2px;height:30px;background:rgba(30,30,70,0.5);"></div>
<div style="left:1412.5px;top:311px;width:2px;height:30px;background:rgba(30,30,70,0.5);"></div>
<div style="left:1430.5px;top:311px;width:2px;height:30px;background:rgba(30,30,70,0.5);"></div>
<div style="left:1460.5px;top:311px;width:2px;height:30px;background:rgba(30,30,70,0.5);"></div>
<div style="left:1476px;top:311px;width:8.5px;height:30px;background:#6263a7;box-shadow:inset 0 0 0 1px rgba(255,255,255,0.10),inset -1px -1px 0 rgba(0,0,0,0.18);"></div>
<div class="z" style="left:1475.5px;top:312px;width:9.0px;color:#fff;letter-spacing:0.6px">l</div>
<div style="left:1485.5px;top:311px;width:77.0px;height:30px;background:#6263a7;box-shadow:inset 0 0 0 1px rgba(255,255,255,0.10),inset -1px -1px 0 rgba(0,0,0,0.18);"></div>
<div class="z" style="left:1485.5px;top:312px;width:77.0px;color:#fff">LOAD<span class="u">_</span></div>
<div style="left:1522.5px;top:311px;width:2px;height:30px;background:rgba(30,30,70,0.5);"></div>
<div style="left:1540.5px;top:311px;width:2px;height:30px;background:rgba(30,30,70,0.5);"></div>
<div style="left:1558.5px;top:311px;width:2px;height:30px;background:rgba(30,30,70,0.5);"></div>
<div style="left:1563px;top:311px;width:4.5px;height:30px;background:#6263a7;box-shadow:inset 0 0 0 1px rgba(255,255,255,0.10),inset -1px -1px 0 rgba(0,0,0,0.18);"></div>
<div style="left:1568px;top:311px;width:7px;height:30px;background:#9b9b3b;box-shadow:inset 0 0 0 2.5px #b9b95c;"></div>
<div class="z" style="left:1567.5px;top:312px;width:7.5px;color:#fff">I</div>
<div style="left:1575px;top:311px;width:38px;height:30px;background:#e93323;box-shadow:inset 0 0 0 1px rgba(255,255,255,0.10),inset -1px -1px 0 rgba(0,0,0,0.18);"></div>
<div class="z" style="left:1574.0px;top:312px;width:39.0px;color:#fff">CO</div>
<div style="left:1613px;top:311px;width:9px;height:30px;background:#6263a7;box-shadow:inset 0 0 0 1px rgba(255,255,255,0.10),inset -1px -1px 0 rgba(0,0,0,0.18);"></div>
<svg style="left:1613px;top:311px" width="9" height="30"><polyline points="0.0,11 7.0,18" fill="none" stroke="rgba(40,40,90,0.75)" stroke-width="1.2"/></svg>
<div style="left:1622.5px;top:311px;width:103.5px;height:30px;background:#6263a7;box-shadow:inset 0 0 0 1px rgba(255,255,255,0.10),inset -1px -1px 0 rgba(0,0,0,0.18);"></div>
<div class="z" style="left:1622.5px;top:312px;width:103.5px;color:#fff">LOAD<span class="u">_</span>PI</div>
<div style="left:1659.5px;top:311px;width:2px;height:30px;background:rgba(30,30,70,0.5);"></div>
<div style="left:1677.5px;top:311px;width:2px;height:30px;background:rgba(30,30,70,0.5);"></div>
<div style="left:1696.5px;top:311px;width:2px;height:30px;background:rgba(30,30,70,0.5);"></div>
<div style="left:1713.5px;top:311px;width:2px;height:30px;background:rgba(30,30,70,0.5);"></div>
<div style="left:1721.5px;top:311px;width:2px;height:30px;background:rgba(30,30,70,0.5);"></div>
<div style="left:1727px;top:311px;width:5.5px;height:30px;background:#6263a7;box-shadow:inset 0 0 0 1px rgba(255,255,255,0.10),inset -1px -1px 0 rgba(0,0,0,0.18);"></div>
<div style="left:1733.5px;top:311px;width:32.5px;height:30px;background:#6263a7;box-shadow:inset 0 0 0 1px rgba(255,255,255,0.10),inset -1px -1px 0 rgba(0,0,0,0.18);"></div>
<svg style="left:1733.5px;top:311px" width="32.5" height="30"><polyline points="0.0,11 7.0,18 14.0,11 21.0,18 28.0,11" fill="none" stroke="rgba(40,40,90,0.75)" stroke-width="1.2"/></svg>
<div class="z" style="left:1733.5px;top:312px;width:32.5px;color:#fff;letter-spacing:0.6px">l</div>
<div style="left:1794.5px;top:311px;width:35.5px;height:30px;background:#6263a7;box-shadow:inset 0 0 0 1px rgba(255,255,255,0.10),inset -1px -1px 0 rgba(0,0,0,0.18);"></div>
<div class="z" style="left:1797.5px;top:312px;width:32.5px;color:#fff">INI</div>
<div style="left:1831px;top:311px;width:162px;height:30px;background:#6263a7;box-shadow:inset 0 0 0 1px rgba(255,255,255,0.10),inset -1px -1px 0 rgba(0,0,0,0.18);"></div>
<div class="z" style="left:1830.5px;top:312px;width:162.5px;color:#fff;letter-spacing:0.6px">LOAD<span class="u">_</span>Pkgimg</div>
<div style="left:1816.5px;top:311px;width:2px;height:30px;background:rgba(30,30,70,0.5);"></div>
<div style="left:1873.5px;top:311px;width:2px;height:30px;background:rgba(30,30,70,0.5);"></div>
<div style="left:1892.5px;top:311px;width:2px;height:30px;background:rgba(30,30,70,0.5);"></div>
<div style="left:1910.5px;top:311px;width:2px;height:30px;background:rgba(30,30,70,0.5);"></div>
<div style="left:1953.5px;top:311px;width:2px;height:30px;background:rgba(30,30,70,0.5);"></div>
<div style="left:1974.5px;top:311px;width:2px;height:30px;background:rgba(30,30,70,0.5);"></div>
<div style="left:1989.5px;top:311px;width:2px;height:30px;background:rgba(30,30,70,0.5);"></div>
<div style="left:1px;top:342px;width:6.5px;height:30px;background:#6263a7;box-shadow:inset 0 0 0 1px rgba(255,255,255,0.10),inset -1px -1px 0 rgba(0,0,0,0.18);"></div>
<div class="z" style="left:-7.5px;top:343px;width:15.0px;color:#fff">A</div>
<div style="left:14px;top:342px;width:18.5px;height:30px;background:#e93323;box-shadow:inset 0 0 0 1px rgba(255,255,255,0.10),inset -1px -1px 0 rgba(0,0,0,0.18);"></div>
<div class="z" style="left:13.5px;top:343px;width:19.0px;color:#fff">C</div>
<div style="left:32.5px;top:342px;width:3.5px;height:30px;background:#6263a7;"></div>
<div style="left:42px;top:342px;width:17px;height:30px;background:#6263a7;box-shadow:inset 0 0 0 1px rgba(255,255,255,0.10),inset -1px -1px 0 rgba(0,0,0,0.18);"></div>
<div class="z" style="left:41.5px;top:343px;width:17.5px;color:#fff">M</div>
<div style="left:84px;top:342px;width:8px;height:30px;background:#6263a7;box-shadow:inset 0 0 0 1px rgba(255,255,255,0.10),inset -1px -1px 0 rgba(0,0,0,0.18);"></div>
<div style="left:110px;top:342px;width:18px;height:30px;background:#6263a7;box-shadow:inset 0 0 0 1px rgba(255,255,255,0.10),inset -1px -1px 0 rgba(0,0,0,0.18);"></div>
<div class="z" style="left:109.5px;top:343px;width:18.5px;color:#fff">V</div>
<div style="left:134px;top:342px;width:24px;height:30px;background:#6263a7;box-shadow:inset 0 0 0 1px rgba(255,255,255,0.10),inset -1px -1px 0 rgba(0,0,0,0.18);"></div>
<div class="z" style="left:137.5px;top:343px;width:20.5px;color:#fff">V</div>
<div style="left:161px;top:342px;width:224px;height:30px;background:#6263a7;box-shadow:inset 0 0 0 1px rgba(255,255,255,0.10),inset -1px -1px 0 rgba(0,0,0,0.18);"></div>
<svg style="left:161px;top:342px" width="224" height="30"><polyline points="0.0,11 7.0,18 14.0,11 21.0,18 28.0,11 35.0,18 42.0,11 49.0,18 56.0,11 63.0,18 70.0,11 77.0,18 84.0,11 91.0,18 98.0,11 105.0,18 112.0,11 119.0,18 126.0,11 133.0,18 140.0,11 147.0,18 154.0,11 161.0,18 168.0,11 175.0,18 182.0,11 189.0,18 196.0,11 203.0,18 210.0,11 217.0,18 224.0,11" fill="none" stroke="rgba(40,40,90,0.75)" stroke-width="1.2"/></svg>
<div style="left:181.5px;top:342px;width:2px;height:30px;background:rgba(30,30,70,0.5);"></div>
<div style="left:208.5px;top:342px;width:2px;height:30px;background:rgba(30,30,70,0.5);"></div>
<div style="left:235.5px;top:342px;width:2px;height:30px;background:rgba(30,30,70,0.5);"></div>
<div class="z" style="left:161px;top:343px;width:224px;text-align:center;color:#f0a050;letter-spacing:0.2px">14,532</div>
<div style="left:388px;top:342px;width:9px;height:30px;background:#6263a7;box-shadow:inset 0 0 0 1px rgba(255,255,255,0.10),inset -1px -1px 0 rgba(0,0,0,0.18);"></div>
<div class="z" style="left:387.0px;top:343px;width:10.0px;color:#fff">I</div>
<div style="left:401px;top:342px;width:4px;height:30px;background:#6263a7;box-shadow:inset 0 0 0 1px rgba(255,255,255,0.10),inset -1px -1px 0 rgba(0,0,0,0.18);"></div>
<div style="left:405px;top:342px;width:6.5px;height:30px;background:#e93323;box-shadow:inset 0 0 0 1px rgba(255,255,255,0.10),inset -1px -1px 0 rgba(0,0,0,0.18);"></div>
<div class="z" style="left:404.5px;top:343px;width:7.0px;color:#fff">C</div>
<div style="left:418px;top:342px;width:222px;height:30px;background:#9b9b3b;box-shadow:inset 0 0 0 2.5px #b9b95c;"></div>
<div style="left:421.5px;top:342px;width:2px;height:30px;background:rgba(60,60,20,0.5);"></div>
<div style="left:457.5px;top:342px;width:2px;height:30px;background:rgba(60,60,20,0.5);"></div>
<div style="left:483.5px;top:342px;width:2px;height:30px;background:rgba(60,60,20,0.5);"></div>
<div style="left:550.5px;top:342px;width:2px;height:30px;background:rgba(60,60,20,0.5);"></div>
<div style="left:562.5px;top:342px;width:2px;height:30px;background:rgba(60,60,20,0.5);"></div>
<div style="left:568.5px;top:342px;width:2px;height:30px;background:rgba(60,60,20,0.5);"></div>
<div style="left:575.5px;top:342px;width:2px;height:30px;background:rgba(60,60,20,0.5);"></div>
<div style="left:581.5px;top:342px;width:2px;height:30px;background:rgba(60,60,20,0.5);"></div>
<div style="left:587.5px;top:342px;width:2px;height:30px;background:rgba(60,60,20,0.5);"></div>
<div class="z" style="left:462px;top:343px;width:170px;color:#fff">INFERENCE</div>
<div style="left:640.5px;top:342px;width:173.5px;height:30px;background:#e93323;box-shadow:inset 0 0 0 1px rgba(255,255,255,0.10),inset -1px -1px 0 rgba(0,0,0,0.18);"></div>
<div class="z" style="left:640.0px;top:343px;width:174.0px;color:#fff">CODEINST<span class="u">_</span>CO</div>
<div style="left:814.5px;top:342px;width:15.5px;height:30px;background:#9b9b3b;box-shadow:inset 0 0 0 2.5px #b9b95c;"></div>
<div class="z" style="left:814.5px;top:343px;width:15.5px;color:#fff">II</div>
<div style="left:830.5px;top:342px;width:227.5px;height:30px;background:#6263a7;box-shadow:inset 0 0 0 1px rgba(255,255,255,0.10),inset -1px -1px 0 rgba(0,0,0,0.18);"></div>
<div class="z" style="left:829.5px;top:343px;width:228.5px;color:#fff">CODEINST<span class="u">_</span>COMPIL</div>
<div style="left:1059px;top:342px;width:15px;height:30px;background:#6263a7;box-shadow:inset 0 0 0 1px rgba(255,255,255,0.10),inset -1px -1px 0 rgba(0,0,0,0.18);"></div>
<svg style="left:1059px;top:342px" width="15" height="30"><polyline points="0.0,11 7.0,18 14.0,11" fill="none" stroke="rgba(40,40,90,0.75)" stroke-width="1.2"/></svg>
<div style="left:1076px;top:342px;width:29px;height:30px;background:#6263a7;box-shadow:inset 0 0 0 1px rgba(255,255,255,0.10),inset -1px -1px 0 rgba(0,0,0,0.18);"></div>
<svg style="left:1076px;top:342px" width="29" height="30"><polyline points="0.0,11 7.0,18 14.0,11 21.0,18 28.0,11" fill="none" stroke="rgba(40,40,90,0.75)" stroke-width="1.2"/></svg>
<div style="left:1106px;top:342px;width:14px;height:30px;background:#6263a7;box-shadow:inset 0 0 0 1px rgba(255,255,255,0.10),inset -1px -1px 0 rgba(0,0,0,0.18);"></div>
<svg style="left:1106px;top:342px" width="14" height="30"><polyline points="0.0,11 7.0,18 14.0,11" fill="none" stroke="rgba(40,40,90,0.75)" stroke-width="1.2"/></svg>
<div style="left:1121px;top:342px;width:10.5px;height:30px;background:#6263a7;box-shadow:inset 0 0 0 1px rgba(255,255,255,0.10),inset -1px -1px 0 rgba(0,0,0,0.18);"></div>
<div class="z" style="left:1120.0px;top:343px;width:11.5px;color:#fff">V</div>
<div style="left:1132px;top:342px;width:7px;height:30px;background:#e93323;box-shadow:inset 0 0 0 1px rgba(255,255,255,0.10),inset -1px -1px 0 rgba(0,0,0,0.18);"></div>
<div class="z" style="left:1131.0px;top:343px;width:8.0px;color:#fff">C</div>
<div style="left:1140px;top:342px;width:72.5px;height:30px;background:#6263a7;box-shadow:inset 0 0 0 1px rgba(255,255,255,0.10),inset -1px -1px 0 rgba(0,0,0,0.18);"></div>
<div class="z" style="left:1140.5px;top:343px;width:72.0px;color:#fff">VERIFY</div>
<div style="left:1182.5px;top:342px;width:2px;height:30px;background:rgba(30,30,70,0.5);"></div>
<div style="left:1218px;top:342px;width:5px;height:30px;background:#6263a7;box-shadow:inset 0 0 0 1px rgba(255,255,255,0.10),inset -1px -1px 0 rgba(0,0,0,0.18);"></div>
<div style="left:1224px;top:342px;width:19px;height:30px;background:#e93323;box-shadow:inset 0 0 0 1px rgba(255,255,255,0.10),inset -1px -1px 0 rgba(0,0,0,0.18);"></div>
<div class="z" style="left:1223.5px;top:343px;width:19.5px;color:#fff">C(</div>
<div style="left:1243px;top:342px;width:3px;height:30px;background:#6263a7;"></div>
<div style="left:1258px;top:342px;width:9px;height:30px;background:#6263a7;box-shadow:inset 0 0 0 1px rgba(255,255,255,0.10),inset -1px -1px 0 rgba(0,0,0,0.18);"></div>
<svg style="left:1258px;top:342px" width="9" height="30"><polyline points="0.0,11 7.0,18" fill="none" stroke="rgba(40,40,90,0.75)" stroke-width="1.2"/></svg>
<div style="left:1272px;top:342px;width:75px;height:30px;background:#6263a7;box-shadow:inset 0 0 0 1px rgba(255,255,255,0.10),inset -1px -1px 0 rgba(0,0,0,0.18);"></div>
<div class="z" style="left:1272.5px;top:343px;width:74.5px;color:#fff">VERIFY</div>
<div style="left:1315.5px;top:342px;width:2px;height:30px;background:rgba(30,30,70,0.5);"></div>
<div style="left:1333.5px;top:342px;width:2px;height:30px;background:rgba(30,30,70,0.5);"></div>
<div style="left:1354px;top:342px;width:3px;height:30px;background:#6263a7;"></div>
<div style="left:1363px;top:342px;width:109.5px;height:30px;background:#6263a7;box-shadow:inset 0 0 0 1px rgba(255,255,255,0.10),inset -1px -1px 0 rgba(0,0,0,0.18);"></div>
<div class="z" style="left:1365.5px;top:343px;width:107.0px;color:#fff">VERIFY<span class="u">_</span>E</div>
<div style="left:1370.5px;top:342px;width:2px;height:30px;background:rgba(30,30,70,0.5);"></div>
<div style="left:1412.5px;top:342px;width:2px;height:30px;background:rgba(30,30,70,0.5);"></div>
<div style="left:1430.5px;top:342px;width:2px;height:30px;background:rgba(30,30,70,0.5);"></div>
<div style="left:1460.5px;top:342px;width:2px;height:30px;background:rgba(30,30,70,0.5);"></div>
<div style="left:1477px;top:342px;width:7.5px;height:30px;background:#6263a7;box-shadow:inset 0 0 0 1px rgba(255,255,255,0.10),inset -1px -1px 0 rgba(0,0,0,0.18);"></div>
<div style="left:1486.5px;top:342px;width:80.0px;height:30px;background:#6263a7;box-shadow:inset 0 0 0 1px rgba(255,255,255,0.10),inset -1px -1px 0 rgba(0,0,0,0.18);"></div>
<div class="z" style="left:1490.5px;top:343px;width:76.0px;color:#fff">VERIFY</div>
<div style="left:1522.5px;top:342px;width:2px;height:30px;background:rgba(30,30,70,0.5);"></div>
<div style="left:1540.5px;top:342px;width:2px;height:30px;background:rgba(30,30,70,0.5);"></div>
<div style="left:1558.5px;top:342px;width:2px;height:30px;background:rgba(30,30,70,0.5);"></div>
<div style="left:1568px;top:342px;width:3.5px;height:30px;background:#6263a7;"></div>
<div style="left:1576px;top:342px;width:40px;height:30px;background:#6263a7;box-shadow:inset 0 0 0 1px rgba(255,255,255,0.10),inset -1px -1px 0 rgba(0,0,0,0.18);"></div>
<svg style="left:1576px;top:342px" width="40" height="30"><polyline points="0.0,11 7.0,18 14.0,11 21.0,18 28.0,11 35.0,18" fill="none" stroke="rgba(40,40,90,0.75)" stroke-width="1.2"/></svg>
<div class="z" style="left:1590px;top:343px;width:26px;color:#fff">LL</div>
<div style="left:1623px;top:342px;width:93px;height:30px;background:#6263a7;box-shadow:inset 0 0 0 1px rgba(255,255,255,0.10),inset -1px -1px 0 rgba(0,0,0,0.18);"></div>
<div class="z" style="left:1625.5px;top:343px;width:90.5px;color:#fff">VERIFY<span class="u">_</span></div>
<div style="left:1659.5px;top:342px;width:2px;height:30px;background:rgba(30,30,70,0.5);"></div>
<div style="left:1677.5px;top:342px;width:2px;height:30px;background:rgba(30,30,70,0.5);"></div>
<div style="left:1696.5px;top:342px;width:2px;height:30px;background:rgba(30,30,70,0.5);"></div>
<div style="left:1716px;top:342px;width:9px;height:30px;background:#9b9b3b;box-shadow:inset 0 0 0 2.5px #b9b95c;"></div>
<div class="z" style="left:1716.5px;top:343px;width:8.5px;color:#fff">I</div>
<div style="left:1725px;top:342px;width:3px;height:30px;background:#6263a7;"></div>
<div style="left:1734px;top:342px;width:6px;height:30px;background:#6263a7;box-shadow:inset 0 0 0 1px rgba(255,255,255,0.10),inset -1px -1px 0 rgba(0,0,0,0.18);"></div>
<div style="left:1799px;top:342px;width:30px;height:30px;background:#6263a7;box-shadow:inset 0 0 0 1px rgba(255,255,255,0.10),inset -1px -1px 0 rgba(0,0,0,0.18);"></div>
<div class="z" style="left:1798.5px;top:343px;width:30.5px;color:#fff">LO</div>
<div style="left:1832px;top:342px;width:158px;height:30px;background:#6263a7;box-shadow:inset 0 0 0 1px rgba(255,255,255,0.10),inset -1px -1px 0 rgba(0,0,0,0.18);"></div>
<div class="z" style="left:1835.5px;top:343px;width:154.5px;color:#fff;letter-spacing:0.6px">VERIFY<span class="u">_</span>Edges</div>
<div style="left:1873.5px;top:342px;width:2px;height:30px;background:rgba(30,30,70,0.5);"></div>
<div style="left:1892.5px;top:342px;width:2px;height:30px;background:rgba(30,30,70,0.5);"></div>
<div style="left:1910.5px;top:342px;width:2px;height:30px;background:rgba(30,30,70,0.5);"></div>
<div style="left:1953.5px;top:342px;width:2px;height:30px;background:rgba(30,30,70,0.5);"></div>
<div style="left:1974.5px;top:342px;width:2px;height:30px;background:rgba(30,30,70,0.5);"></div>
<div style="left:14px;top:373px;width:18.5px;height:30px;background:#5d5ea2;box-shadow:inset 0 0 0 1px rgba(255,255,255,0.10),inset -1px -1px 0 rgba(0,0,0,0.18);"></div>
<div class="z" style="left:18.5px;top:374px;width:14.0px;color:#fff">L</div>
<div style="left:42px;top:373px;width:17px;height:30px;background:#5d5ea2;box-shadow:inset 0 0 0 1px rgba(255,255,255,0.10),inset -1px -1px 0 rgba(0,0,0,0.18);"></div>
<svg style="left:42px;top:373px" width="17" height="30"><polyline points="0.0,11 7.0,18 14.0,11" fill="none" stroke="rgba(40,40,90,0.75)" stroke-width="1.2"/></svg>
<div style="left:110px;top:373px;width:14.5px;height:30px;background:#5d5ea2;box-shadow:inset 0 0 0 1px rgba(255,255,255,0.10),inset -1px -1px 0 rgba(0,0,0,0.18);"></div>
<svg style="left:110px;top:373px" width="14.5" height="30"><polyline points="0.0,11 7.0,18 14.0,11" fill="none" stroke="rgba(40,40,90,0.75)" stroke-width="1.2"/></svg>
<div style="left:140px;top:373px;width:15px;height:30px;background:#5d5ea2;box-shadow:inset 0 0 0 1px rgba(255,255,255,0.10),inset -1px -1px 0 rgba(0,0,0,0.18);"></div>
<svg style="left:140px;top:373px" width="15" height="30"><polyline points="0.0,11 7.0,18 14.0,11" fill="none" stroke="rgba(40,40,90,0.75)" stroke-width="1.2"/></svg>
<div style="left:388px;top:373px;width:6px;height:30px;background:#5d5ea2;box-shadow:inset 0 0 0 1px rgba(255,255,255,0.10),inset -1px -1px 0 rgba(0,0,0,0.18);"></div>
<div style="left:405px;top:373px;width:6.5px;height:30px;background:#5d5ea2;box-shadow:inset 0 0 0 1px rgba(255,255,255,0.10),inset -1px -1px 0 rgba(0,0,0,0.18);"></div>
<div style="left:418px;top:373px;width:43px;height:30px;background:#5d5ea2;box-shadow:inset 0 0 0 1px rgba(255,255,255,0.10),inset -1px -1px 0 rgba(0,0,0,0.18);"></div>
<div class="z" style="left:417.0px;top:374px;width:44.0px;color:#f0a050;letter-spacing:0.2px">398</div>
<div style="left:538px;top:373px;width:102px;height:30px;background:#5d5ea2;box-shadow:inset 0 0 0 1px rgba(255,255,255,0.10),inset -1px -1px 0 rgba(0,0,0,0.18);"></div>
<svg style="left:538px;top:373px" width="102" height="30"><polyline points="0.0,11 7.0,18 14.0,11 21.0,18 28.0,11 35.0,18 42.0,11 49.0,18 56.0,11 63.0,18 70.0,11 77.0,18 84.0,11 91.0,18 98.0,11" fill="none" stroke="rgba(40,40,90,0.75)" stroke-width="1.2"/></svg>
<div style="left:550.5px;top:373px;width:2px;height:30px;background:rgba(30,30,70,0.5);"></div>
<div style="left:562.5px;top:373px;width:2px;height:30px;background:rgba(30,30,70,0.5);"></div>
<div style="left:568.5px;top:373px;width:2px;height:30px;background:rgba(30,30,70,0.5);"></div>
<div style="left:575.5px;top:373px;width:2px;height:30px;background:rgba(30,30,70,0.5);"></div>
<div style="left:581.5px;top:373px;width:2px;height:30px;background:rgba(30,30,70,0.5);"></div>
<div style="left:587.5px;top:373px;width:2px;height:30px;background:rgba(30,30,70,0.5);"></div>
<div class="z" style="left:568px;top:374px;width:60px;color:#f0a050;letter-spacing:0.2px">920</div>
<div style="left:641px;top:373px;width:145px;height:30px;background:#5d5ea2;box-shadow:inset 0 0 0 1px rgba(255,255,255,0.10),inset -1px -1px 0 rgba(0,0,0,0.18);"></div>
<div class="z" style="left:640.0px;top:374px;width:146.0px;color:#fff">CODEGEN<span class="u">_</span>C</div>
<div style="left:787px;top:373px;width:5.5px;height:30px;background:#5d5ea2;box-shadow:inset 0 0 0 1px rgba(255,255,255,0.10),inset -1px -1px 0 rgba(0,0,0,0.18);"></div>
<div style="left:793.5px;top:373px;width:20.5px;height:30px;background:#5d5ea2;box-shadow:inset 0 0 0 1px rgba(255,255,255,0.10),inset -1px -1px 0 rgba(0,0,0,0.18);"></div>
<div class="z" style="left:792.5px;top:374px;width:21.5px;color:#fff">LL</div>
<div style="left:815px;top:373px;width:9px;height:30px;background:#5d5ea2;box-shadow:inset 0 0 0 1px rgba(255,255,255,0.10),inset -1px -1px 0 rgba(0,0,0,0.18);"></div>
<div style="left:830.5px;top:373px;width:110.5px;height:30px;background:#5d5ea2;box-shadow:inset 0 0 0 1px rgba(255,255,255,0.10),inset -1px -1px 0 rgba(0,0,0,0.18);"></div>
<svg style="left:830.5px;top:373px" width="110.5" height="30"><polyline points="0.0,11 7.0,18 14.0,11 21.0,18 28.0,11 35.0,18 42.0,11 49.0,18 56.0,11 63.0,18 70.0,11 77.0,18 84.0,11 91.0,18 98.0,11 105.0,18" fill="none" stroke="rgba(40,40,90,0.75)" stroke-width="1.2"/></svg>
<div class="z" style="left:831.5px;top:374px;width:7px;color:#fff">C</div>
<div class="z" style="left:864.5px;top:374px;width:40px;color:#f0a050;letter-spacing:0.2px">75</div>
<div style="left:918.5px;top:373px;width:15.0px;height:30px;background:#5d5ea2;box-shadow:inset 0 0 0 1px rgba(255,255,255,0.10),inset -1px -1px 0 rgba(0,0,0,0.18);"></div>
<div class="z" style="left:918.0px;top:374px;width:15.5px;color:#fff">LL</div>
<div style="left:923.5px;top:373px;width:2px;height:30px;background:rgba(30,30,70,0.5);"></div>
<div style="left:928.5px;top:373px;width:2px;height:30px;background:rgba(30,30,70,0.5);"></div>
<div style="left:942px;top:373px;width:81px;height:30px;background:#5d5ea2;box-shadow:inset 0 0 0 1px rgba(255,255,255,0.10),inset -1px -1px 0 rgba(0,0,0,0.18);"></div>
<div class="z" style="left:941.5px;top:374px;width:81.5px;color:#fff">LLVM<span class="u">_</span>C</div>
<div style="left:1023px;top:373px;width:27px;height:30px;background:#5d5ea2;box-shadow:inset 0 0 0 1px rgba(255,255,255,0.10),inset -1px -1px 0 rgba(0,0,0,0.18);"></div>
<svg style="left:1023px;top:373px" width="27" height="30"><polyline points="0.0,11 7.0,18 14.0,11 21.0,18" fill="none" stroke="rgba(40,40,90,0.75)" stroke-width="1.2"/></svg>
<div style="left:1050px;top:373px;width:9px;height:30px;background:#5d5ea2;box-shadow:inset 0 0 0 1px rgba(255,255,255,0.10),inset -1px -1px 0 rgba(0,0,0,0.18);"></div>
<div class="z" style="left:1049.5px;top:374px;width:9.5px;color:#fff">L</div>
<div style="left:1121px;top:373px;width:6px;height:30px;background:#5d5ea2;box-shadow:inset 0 0 0 1px rgba(255,255,255,0.10),inset -1px -1px 0 rgba(0,0,0,0.18);"></div>
<div style="left:1132px;top:373px;width:7px;height:30px;background:#5d5ea2;box-shadow:inset 0 0 0 1px rgba(255,255,255,0.10),inset -1px -1px 0 rgba(0,0,0,0.18);"></div>
<div style="left:1140px;top:373px;width:3px;height:30px;background:#5d5ea2;"></div>
<div style="left:1208px;top:373px;width:3.5px;height:30px;background:#5d5ea2;"></div>
<div style="left:1224px;top:373px;width:22px;height:30px;background:#5d5ea2;box-shadow:inset 0 0 0 1px rgba(255,255,255,0.10),inset -1px -1px 0 rgba(0,0,0,0.18);"></div>
<div class="z" style="left:1228.5px;top:374px;width:17.5px;color:#fff">L</div>
<div style="left:1273px;top:373px;width:3px;height:30px;background:#5d5ea2;"></div>
<div style="left:1342px;top:373px;width:3.5px;height:30px;background:#5d5ea2;"></div>
<div style="left:1367px;top:373px;width:3.5px;height:30px;background:#5d5ea2;"></div>
<div style="left:1438px;top:373px;width:32.5px;height:30px;background:#5d5ea2;box-shadow:inset 0 0 0 1px rgba(255,255,255,0.10),inset -1px -1px 0 rgba(0,0,0,0.18);"></div>
<svg style="left:1438px;top:373px" width="32.5" height="30"><polyline points="0.0,11 7.0,18 14.0,11 21.0,18 28.0,11" fill="none" stroke="rgba(40,40,90,0.75)" stroke-width="1.2"/></svg>
<div style="left:1491.5px;top:373px;width:3.5px;height:30px;background:#5d5ea2;"></div>
<div style="left:1561.5px;top:373px;width:3.5px;height:30px;background:#5d5ea2;"></div>
<div style="left:1589.5px;top:373px;width:3.5px;height:30px;background:#5d5ea2;"></div>
<div style="left:1599.5px;top:373px;width:4.5px;height:30px;background:#5d5ea2;box-shadow:inset 0 0 0 1px rgba(255,255,255,0.10),inset -1px -1px 0 rgba(0,0,0,0.18);"></div>
<div style="left:1626.5px;top:373px;width:3.5px;height:30px;background:#5d5ea2;"></div>
<div style="left:1716px;top:373px;width:3px;height:30px;background:#5d5ea2;"></div>
<div style="left:1837px;top:373px;width:3px;height:30px;background:#5d5ea2;"></div>
<div style="left:1912px;top:373px;width:3px;height:30px;background:#5d5ea2;"></div>
<div style="left:1699px;top:373px;width:13.5px;height:30px;background:#5d5ea2;box-shadow:inset 0 0 0 1px rgba(255,255,255,0.10),inset -1px -1px 0 rgba(0,0,0,0.18);"></div>
<svg style="left:1699px;top:373px" width="13.5" height="30"><polyline points="0.0,11 7.0,18" fill="none" stroke="rgba(40,40,90,0.75)" stroke-width="1.2"/></svg>
<div style="left:1799px;top:373px;width:30px;height:30px;background:#5d5ea2;box-shadow:inset 0 0 0 1px rgba(255,255,255,0.10),inset -1px -1px 0 rgba(0,0,0,0.18);"></div>
<div class="z" style="left:1798.5px;top:374px;width:30.5px;color:#fff">MA</div>
<div style="left:1977.5px;top:373px;width:10.0px;height:30px;background:#5d5ea2;box-shadow:inset 0 0 0 1px rgba(255,255,255,0.10),inset -1px -1px 0 rgba(0,0,0,0.18);"></div>
<svg style="left:1977.5px;top:373px" width="10.0" height="30"><polyline points="0.0,11 7.0,18" fill="none" stroke="rgba(40,40,90,0.75)" stroke-width="1.2"/></svg>
<div style="left:20.5px;top:404px;width:3.5px;height:30px;background:#5c5da0;"></div>
<div style="left:641px;top:404px;width:145px;height:30px;background:#5c5da0;box-shadow:inset 0 0 0 1px rgba(255,255,255,0.10),inset -1px -1px 0 rgba(0,0,0,0.18);"></div>
<div class="z" style="left:640.0px;top:405px;width:146.0px;color:#fff">CODEGEN<span class="u">_</span>LL</div>
<div style="left:793.5px;top:404px;width:5.5px;height:30px;background:#5c5da0;box-shadow:inset 0 0 0 1px rgba(255,255,255,0.10),inset -1px -1px 0 rgba(0,0,0,0.18);"></div>
<div style="left:830.5px;top:404px;width:7.5px;height:30px;background:#5c5da0;box-shadow:inset 0 0 0 1px rgba(255,255,255,0.10),inset -1px -1px 0 rgba(0,0,0,0.18);"></div>
<div style="left:918.5px;top:404px;width:5.0px;height:30px;background:#5c5da0;box-shadow:inset 0 0 0 1px rgba(255,255,255,0.10),inset -1px -1px 0 rgba(0,0,0,0.18);"></div>
<div style="left:929.5px;top:404px;width:3.0px;height:30px;background:#5c5da0;"></div>
<div style="left:942px;top:404px;width:36.5px;height:30px;background:#5c5da0;box-shadow:inset 0 0 0 1px rgba(255,255,255,0.10),inset -1px -1px 0 rgba(0,0,0,0.18);"></div>
<div class="z" style="left:941.5px;top:405px;width:37.0px;color:#fff">LLV</div>
<div style="left:1049px;top:404px;width:4px;height:30px;background:#5c5da0;box-shadow:inset 0 0 0 1px rgba(255,255,255,0.10),inset -1px -1px 0 rgba(0,0,0,0.18);"></div>
<div style="left:1229px;top:404px;width:5px;height:30px;background:#5c5da0;box-shadow:inset 0 0 0 1px rgba(255,255,255,0.10),inset -1px -1px 0 rgba(0,0,0,0.18);"></div>
<div style="left:1799px;top:404px;width:30px;height:30px;background:#5c5da0;box-shadow:inset 0 0 0 1px rgba(255,255,255,0.10),inset -1px -1px 0 rgba(0,0,0,0.18);"></div>
<div class="z" style="left:1798.5px;top:405px;width:30.5px;color:#f0a050;letter-spacing:0.2px">38</div>
<div style="left:1815.5px;top:404px;width:2px;height:30px;background:rgba(30,30,70,0.5);"></div>
<div style="left:641px;top:435px;width:145px;height:30px;background:#53549a;box-shadow:inset 0 0 0 1px rgba(255,255,255,0.10),inset -1px -1px 0 rgba(0,0,0,0.18);"></div>
<div style="left:652.0px;top:435px;width:2px;height:30px;background:rgba(140,140,210,0.5);"></div>
<div style="left:662.5px;top:435px;width:2px;height:30px;background:rgba(140,140,210,0.5);"></div>
<div style="left:665.5px;top:435px;width:2px;height:30px;background:rgba(140,140,210,0.5);"></div>
<div style="left:672.5px;top:435px;width:2px;height:30px;background:rgba(140,140,210,0.5);"></div>
<div style="left:682.0px;top:435px;width:2px;height:30px;background:rgba(140,140,210,0.5);"></div>
<div style="left:694.5px;top:435px;width:2px;height:30px;background:rgba(140,140,210,0.5);"></div>
<div style="left:707.0px;top:435px;width:2px;height:30px;background:rgba(140,140,210,0.5);"></div>
<div style="left:727.0px;top:435px;width:2px;height:30px;background:rgba(140,140,210,0.5);"></div>
<div style="left:728.5px;top:435px;width:2px;height:30px;background:rgba(140,140,210,0.5);"></div>
<div style="left:747.0px;top:435px;width:2px;height:30px;background:rgba(140,140,210,0.5);"></div>
<div style="left:749.5px;top:435px;width:2px;height:30px;background:rgba(140,140,210,0.5);"></div>
<div style="left:757.5px;top:435px;width:2px;height:30px;background:rgba(140,140,210,0.5);"></div>
<div class="z" style="left:652.5px;top:436px;width:10px;color:#fff">C(</div>
<div class="z" style="left:667px;top:436px;width:6px;color:#fff">(</div>
<div class="z" style="left:683px;top:436px;width:12px;color:#fff">C</div>
<div class="z" style="left:708px;top:436px;width:20px;color:#fff">C(</div>
<div class="z" style="left:729.5px;top:436px;width:18px;color:#fff">C(</div>
<div class="z" style="left:749px;top:436px;width:8px;color:#fff">(</div>
<div class="z" style="left:758.5px;top:436px;width:27px;color:#f0a050;letter-spacing:0.2px">48</div>
<div style="left:652.5px;top:466px;width:10.5px;height:30px;background:#5e5fa3;box-shadow:inset 0 0 0 1px rgba(255,255,255,0.10),inset -1px -1px 0 rgba(0,0,0,0.18);"></div>
<svg style="left:652.5px;top:466px" width="10.5" height="30"><polyline points="0.0,11 7.0,18" fill="none" stroke="rgba(40,40,90,0.75)" stroke-width="1.2"/></svg>
<div style="left:666px;top:466px;width:7px;height:30px;background:#5e5fa3;box-shadow:inset 0 0 0 1px rgba(255,255,255,0.10),inset -1px -1px 0 rgba(0,0,0,0.18);"></div>
<div style="left:682.5px;top:466px;width:12.5px;height:30px;background:#5e5fa3;box-shadow:inset 0 0 0 1px rgba(255,255,255,0.10),inset -1px -1px 0 rgba(0,0,0,0.18);"></div>
<svg style="left:682.5px;top:466px" width="12.5" height="30"><polyline points="0.0,11 7.0,18" fill="none" stroke="rgba(40,40,90,0.75)" stroke-width="1.2"/></svg>
<div style="left:707.5px;top:466px;width:20.0px;height:30px;background:#5e5fa3;box-shadow:inset 0 0 0 1px rgba(255,255,255,0.10),inset -1px -1px 0 rgba(0,0,0,0.18);"></div>
<div class="z" style="left:709.5px;top:467px;width:18.0px;color:#fff">LI</div>
<div style="left:729px;top:466px;width:18.5px;height:30px;background:#5e5fa3;box-shadow:inset 0 0 0 1px rgba(255,255,255,0.10),inset -1px -1px 0 rgba(0,0,0,0.18);"></div>
<div class="z" style="left:728.5px;top:467px;width:19.0px;color:#fff">LI</div>
<div style="left:750px;top:466px;width:8px;height:30px;background:#5e5fa3;box-shadow:inset 0 0 0 1px rgba(255,255,255,0.10),inset -1px -1px 0 rgba(0,0,0,0.18);"></div>
<div class="z" style="left:749.5px;top:467px;width:8.5px;color:#fff">L</div>
<div style="left:711.5px;top:497px;width:3.5px;height:30px;background:#5e5fa3;"></div>
<div style="left:729.5px;top:497px;width:4.5px;height:30px;background:#5e5fa3;box-shadow:inset 0 0 0 1px rgba(255,255,255,0.10),inset -1px -1px 0 rgba(0,0,0,0.18);"></div>
<div style="left:750.5px;top:497px;width:2.5px;height:30px;background:#5e5fa3;"></div>
<div style="left:1px;top:577.5px;width:421px;height:4.5px;background:#a9332c;"></div>
<div style="left:460px;top:577.5px;width:35px;height:4.5px;background:#a9332c;"></div>
<div style="left:534px;top:577.5px;width:28px;height:4.5px;background:#a9332c;"></div>
<div style="left:642px;top:577.5px;width:1126.5px;height:4.5px;background:#a9332c;"></div>
<div style="left:1785px;top:577.5px;width:193px;height:4.5px;background:#a9332c;"></div>
<div style="left:1px;top:577.5px;width:4.5px;height:4.5px;background:#69df4d;"></div>
<div style="left:86px;top:577.5px;width:4.5px;height:4.5px;background:#69df4d;"></div>
<div style="left:111px;top:577.5px;width:4.5px;height:4.5px;background:#69df4d;"></div>
<div style="left:124px;top:577.5px;width:4.5px;height:4.5px;background:#69df4d;"></div>
<div style="left:152px;top:577.5px;width:4.5px;height:4.5px;background:#69df4d;"></div>
<div style="left:182px;top:577.5px;width:4.5px;height:4.5px;background:#69df4d;"></div>
<div style="left:209px;top:577.5px;width:4.5px;height:4.5px;background:#69df4d;"></div>
<div style="left:236px;top:577.5px;width:4.5px;height:4.5px;background:#69df4d;"></div>
<div style="left:263px;top:577.5px;width:4.5px;height:4.5px;background:#69df4d;"></div>
<div style="left:285px;top:577.5px;width:4.5px;height:4.5px;background:#69df4d;"></div>
<div style="left:310px;top:577.5px;width:4.5px;height:4.5px;background:#69df4d;"></div>
<div style="left:327px;top:577.5px;width:4.5px;height:4.5px;background:#69df4d;"></div>
<div style="left:358px;top:577.5px;width:4.5px;height:4.5px;background:#69df4d;"></div>
<div style="left:378px;top:577.5px;width:4.5px;height:4.5px;background:#69df4d;"></div>
<div style="left:399px;top:577.5px;width:4.5px;height:4.5px;background:#69df4d;"></div>
<div style="left:485px;top:577.5px;width:4.5px;height:4.5px;background:#69df4d;"></div>
<div style="left:552px;top:577.5px;width:4.5px;height:4.5px;background:#69df4d;"></div>
<div style="left:816px;top:577.5px;width:4.5px;height:4.5px;background:#69df4d;"></div>
<div style="left:826px;top:577.5px;width:4.5px;height:4.5px;background:#69df4d;"></div>
<div style="left:1061px;top:577.5px;width:4.5px;height:4.5px;background:#69df4d;"></div>
<div style="left:1080px;top:577.5px;width:4.5px;height:4.5px;background:#69df4d;"></div>
<div style="left:1097px;top:577.5px;width:4.5px;height:4.5px;background:#69df4d;"></div>
<div style="left:1111px;top:577.5px;width:4.5px;height:4.5px;background:#69df4d;"></div>
<div style="left:1143px;top:577.5px;width:4.5px;height:4.5px;background:#69df4d;"></div>
<div style="left:1183px;top:577.5px;width:4.5px;height:4.5px;background:#69df4d;"></div>
<div style="left:1201px;top:577.5px;width:4.5px;height:4.5px;background:#69df4d;"></div>
<div style="left:1222px;top:577.5px;width:4.5px;height:4.5px;background:#69df4d;"></div>
<div style="left:1275px;top:577.5px;width:4.5px;height:4.5px;background:#69df4d;"></div>
<div style="left:1316px;top:577.5px;width:4.5px;height:4.5px;background:#69df4d;"></div>
<div style="left:1334px;top:577.5px;width:4.5px;height:4.5px;background:#69df4d;"></div>
<div style="left:1371px;top:577.5px;width:4.5px;height:4.5px;background:#69df4d;"></div>
<div style="left:1413px;top:577.5px;width:4.5px;height:4.5px;background:#69df4d;"></div>
<div style="left:1431px;top:577.5px;width:4.5px;height:4.5px;background:#69df4d;"></div>
<div style="left:1461px;top:577.5px;width:4.5px;height:4.5px;background:#69df4d;"></div>
<div style="left:1523px;top:577.5px;width:4.5px;height:4.5px;background:#69df4d;"></div>
<div style="left:1541px;top:577.5px;width:4.5px;height:4.5px;background:#69df4d;"></div>
<div style="left:1559px;top:577.5px;width:4.5px;height:4.5px;background:#69df4d;"></div>
<div style="left:1571px;top:577.5px;width:4.5px;height:4.5px;background:#69df4d;"></div>
<div style="left:1660px;top:577.5px;width:4.5px;height:4.5px;background:#69df4d;"></div>
<div style="left:1678px;top:577.5px;width:4.5px;height:4.5px;background:#69df4d;"></div>
<div style="left:1697px;top:577.5px;width:4.5px;height:4.5px;background:#69df4d;"></div>
<div style="left:1722px;top:577.5px;width:4.5px;height:4.5px;background:#69df4d;"></div>
<div style="left:1817px;top:577.5px;width:4.5px;height:4.5px;background:#69df4d;"></div>
<div style="left:1874px;top:577.5px;width:4.5px;height:4.5px;background:#69df4d;"></div>
<div style="left:1893px;top:577.5px;width:4.5px;height:4.5px;background:#69df4d;"></div>
<div style="left:1911px;top:577.5px;width:4.5px;height:4.5px;background:#69df4d;"></div>
<div style="left:1954px;top:577.5px;width:4.5px;height:4.5px;background:#69df4d;"></div>
<div style="left:1975px;top:577.5px;width:4.5px;height:4.5px;background:#69df4d;"></div>
<div style="left:0px;top:588px;width:2px;height:30px;background:#6b8cbd;"></div>
<div style="left:86px;top:588px;width:3px;height:30px;background:#6b8cbd;"></div>
<div style="left:111px;top:588px;width:3px;height:30px;background:#6b8cbd;"></div>
<div style="left:124.5px;top:588px;width:3.0px;height:30px;background:#6b8cbd;"></div>
<div style="left:152px;top:588px;width:3px;height:30px;background:#6b8cbd;"></div>
<div style="left:182px;top:588px;width:3px;height:30px;background:#6b8cbd;"></div>
<div style="left:209px;top:588px;width:3px;height:30px;background:#6b8cbd;"></div>
<div style="left:237px;top:588px;width:3px;height:30px;background:#6b8cbd;"></div>
<div style="left:264px;top:588px;width:3px;height:30px;background:#6b8cbd;"></div>
<div style="left:286px;top:588px;width:3px;height:30px;background:#6b8cbd;"></div>
<div style="left:310px;top:588px;width:3px;height:30px;background:#6b8cbd;"></div>
<div style="left:327.5px;top:588px;width:3.0px;height:30px;background:#6b8cbd;"></div>
<div style="left:358.5px;top:588px;width:3.0px;height:30px;background:#6b8cbd;"></div>
<div style="left:379px;top:588px;width:3px;height:30px;background:#6b8cbd;"></div>
<div style="left:398.5px;top:588px;width:3.0px;height:30px;background:#6b8cbd;"></div>
<div style="left:422px;top:588px;width:18px;height:30px;background:#6b8cbd;"></div>
<div style="left:446px;top:588px;width:6px;height:30px;background:#6b8cbd;"></div>
<div style="left:458px;top:588px;width:3px;height:30px;background:#6b8cbd;"></div>
<div style="left:485.5px;top:588px;width:3.0px;height:30px;background:#6b8cbd;"></div>
<div style="left:496px;top:588px;width:2.5px;height:30px;background:#6b8cbd;"></div>
<div style="left:502px;top:588px;width:2.5px;height:30px;background:#6b8cbd;"></div>
<div style="left:508px;top:588px;width:2.5px;height:30px;background:#6b8cbd;"></div>
<div style="left:514px;top:588px;width:2.5px;height:30px;background:#6b8cbd;"></div>
<div style="left:520px;top:588px;width:2.5px;height:30px;background:#6b8cbd;"></div>
<div style="left:526px;top:588px;width:2.5px;height:30px;background:#6b8cbd;"></div>
<div style="left:531px;top:588px;width:2.5px;height:30px;background:#6b8cbd;"></div>
<div style="left:552px;top:588px;width:3px;height:30px;background:#6b8cbd;"></div>
<div style="left:560px;top:588px;width:2px;height:30px;background:#6b8cbd;"></div>
<div style="left:565px;top:588px;width:2px;height:30px;background:#6b8cbd;"></div>
<div style="left:570px;top:588px;width:2px;height:30px;background:#6b8cbd;"></div>
<div style="left:575px;top:588px;width:2px;height:30px;background:#6b8cbd;"></div>
<div style="left:583px;top:588px;width:18px;height:30px;background:#6b8cbd;"></div>
<div style="left:605px;top:588px;width:21px;height:30px;background:#6b8cbd;"></div>
<div style="left:638px;top:588px;width:3px;height:30px;background:#6b8cbd;"></div>
<div style="left:816px;top:588px;width:3px;height:30px;background:#6b8cbd;"></div>
<div style="left:827px;top:588px;width:3px;height:30px;background:#6b8cbd;"></div>
<div style="left:1061.5px;top:588px;width:3.0px;height:30px;background:#6b8cbd;"></div>
<div style="left:1080px;top:588px;width:6px;height:30px;background:#6b8cbd;"></div>
<div style="left:1097.5px;top:588px;width:3.0px;height:30px;background:#6b8cbd;"></div>
<div style="left:1111.5px;top:588px;width:6.0px;height:30px;background:#6b8cbd;"></div>
<div style="left:1143px;top:588px;width:3px;height:30px;background:#6b8cbd;"></div>
<div style="left:1183.5px;top:588px;width:3.0px;height:30px;background:#6b8cbd;"></div>
<div style="left:1201px;top:588px;width:3px;height:30px;background:#6b8cbd;"></div>
<div style="left:1222.5px;top:588px;width:3.0px;height:30px;background:#6b8cbd;"></div>
<div style="left:1275px;top:588px;width:3px;height:30px;background:#6b8cbd;"></div>
<div style="left:1316.5px;top:588px;width:3.0px;height:30px;background:#6b8cbd;"></div>
<div style="left:1334.5px;top:588px;width:3.0px;height:30px;background:#6b8cbd;"></div>
<div style="left:1371px;top:588px;width:3px;height:30px;background:#6b8cbd;"></div>
<div style="left:1413px;top:588px;width:3px;height:30px;background:#6b8cbd;"></div>
<div style="left:1431.5px;top:588px;width:3.0px;height:30px;background:#6b8cbd;"></div>
<div style="left:1461.5px;top:588px;width:3.0px;height:30px;background:#6b8cbd;"></div>
<div style="left:1522.5px;top:588px;width:3.0px;height:30px;background:#6b8cbd;"></div>
<div style="left:1540.5px;top:588px;width:3.0px;height:30px;background:#6b8cbd;"></div>
<div style="left:1558.5px;top:588px;width:3.0px;height:30px;background:#6b8cbd;"></div>
<div style="left:1570.5px;top:588px;width:3.0px;height:30px;background:#6b8cbd;"></div>
<div style="left:1659.5px;top:588px;width:3.0px;height:30px;background:#6b8cbd;"></div>
<div style="left:1678.5px;top:588px;width:3.0px;height:30px;background:#6b8cbd;"></div>
<div style="left:1696px;top:588px;width:3px;height:30px;background:#6b8cbd;"></div>
<div style="left:1721.5px;top:588px;width:3.0px;height:30px;background:#6b8cbd;"></div>
<div style="left:1768.5px;top:588px;width:15.5px;height:30px;background:#6b8cbd;"></div>
<div style="left:1815.5px;top:588px;width:3.0px;height:30px;background:#6b8cbd;"></div>
<div style="left:1872.5px;top:588px;width:3.0px;height:30px;background:#6b8cbd;"></div>
<div style="left:1892px;top:588px;width:3px;height:30px;background:#6b8cbd;"></div>
<div style="left:1910px;top:588px;width:3px;height:30px;background:#6b8cbd;"></div>
<div style="left:1953.5px;top:588px;width:3.0px;height:30px;background:#6b8cbd;"></div>
<div style="left:1974px;top:588px;width:3px;height:30px;background:#6b8cbd;"></div>
<div class="z" style="left:1770.5px;top:589px;width:14px;color:#f0a050;letter-spacing:0.2px">5</div>
<div class="z" style="left:424px;top:589px;width:14px;color:#f0a050;letter-spacing:0.2px">5</div>
<div class="z" style="left:585px;top:589px;width:14px;color:#f0a050;letter-spacing:0.2px">4</div>
<div class="z" style="left:608px;top:589px;width:14px;color:#f0a050;letter-spacing:0.2px">6</div>
<svg style="left:0;top:0" width="2534" height="640"><polyline points="422.0,576.5 431.5,584.0 441.0,576.5 450.5,584.0 460.0,576.5" fill="none" stroke="#8a8a86" stroke-width="1.4"/></svg>
<svg style="left:0;top:0" width="2534" height="640"><polyline points="495.0,576.5 504.8,584.0 514.5,576.5 524.2,584.0 534.0,576.5" fill="none" stroke="#8a8a86" stroke-width="1.4"/></svg>
<svg style="left:0;top:0" width="2534" height="640"><polyline points="562.0,576.5 570.9,584.0 579.8,576.5 588.7,584.0 597.6,576.5 606.4,584.0 615.3,576.5 624.2,584.0 633.1,576.5 642.0,584.0" fill="none" stroke="#8a8a86" stroke-width="1.4"/></svg>
<svg style="left:0;top:0" width="2534" height="640"><polyline points="1769.0,576.5 1777.5,584.0 1786.0,576.5" fill="none" stroke="#8a8a86" stroke-width="1.4"/></svg>
</div>
<div style="left:933px;top:766px;width:25px;height:202px;background:#1c231f;"></div>
<div style="left:933px;top:766px;width:25px;height:1px;background:#7d8238;"></div>
<div style="left:933px;top:967px;width:25px;height:1px;background:#7d8238;"></div>
<div style="left:933px;top:1002px;width:25px;height:201px;background:#1c231f;"></div>
<div style="left:933px;top:1002px;width:25px;height:1px;background:#7d8238;"></div>
<div style="left:933px;top:1202px;width:25px;height:1px;background:#7d8238;"></div>
<svg style="left:933px;top:760px" width="25" height="460"><path d="M3.5 23 L6 205 L10 208 L13 203 L17 206 L20 203 L23.5 155 V205" fill="none" stroke="#4fb9c0" stroke-width="1.1"/><rect x="1.5" y="20" width="4" height="4" fill="none" stroke="#4fb9c0"/><path d="M0 348 L25 341 V442 H0 Z" fill="#29352f"/><path d="M0 348 L25 341" stroke="#6fd0c8" stroke-width="1.1" fill="none"/></svg>
<div style="left:0px;top:1988px;width:10px;height:14px;background:#454847;"></div>
<div style="left:0px;top:598px;width:935px;height:1398.4px;background:#1b1b17;border:2px solid #46474e;border-top:none;border-left:none;border-radius:0 0 0 12px;"></div>
<div style="left:0px;top:598px;width:934px;height:42px;background:#304878;box-shadow:inset -1.5px 0 0 #4a5d8a, inset 0 1.5px 0 #3c5384;"></div>
<div style="left:0px;top:639px;width:934px;height:1.5px;background:#23262c;"></div>
<svg style="left:9px;top:610px;" width="21" height="18" viewBox="0 0 21 18"><path d="M0.5 0.5 H20.5 L10.5 17.5 Z" fill="#fff"/></svg>
<div class="t" style="left:43px;top:605.5px;color:#fff;">Find zone</div>
<svg style="left:898px;top:608px;" width="22" height="22" viewBox="0 0 22 22"><path d="M1.5 1.5 L20.5 20.5 M20.5 1.5 L1.5 20.5" stroke="#fff" stroke-width="1.3" fill="none"/></svg>
<div style="left:10px;top:656px;width:907px;height:42px;background:#263445;border-radius:9px;box-shadow:inset 0 0 0 1.5px rgba(110,120,160,0.30);"></div>
<div class="t" style="left:17px;top:663.5px;color:#fff;letter-spacing:1.1px;">INFERENCE</div>
<div class="btn" style="left:10px;top:705.6px;width:101px;height:42px;background:#314a6b"></div>
<svg style="left:18px;top:711.5px" width="29" height="29" viewBox="0 0 29 29" preserveAspectRatio="none"><circle cx="11.6" cy="11.6" r="9.3" fill="none" stroke="#fff" stroke-width="4.4"/><line x1="18.6" y1="18.6" x2="25.7" y2="25.7" stroke="#fff" stroke-width="4.4" stroke-linecap="round"/></svg>
<div class="t" style="left:54px;top:713.3px;color:#fff;">Find</div>
<div class="btn" style="left:127px;top:705.6px;width:112px;height:42px;background:#314a6b"></div>
<svg style="left:134.5px;top:711px" width="29" height="29" viewBox="0 0 28 28" preserveAspectRatio="none"><circle cx="14" cy="14" r="11.4" fill="none" stroke="#fff" stroke-width="3.4"/><line x1="6" y1="6" x2="22" y2="22" stroke="#fff" stroke-width="3.4"/></svg>
<div class="t" style="left:171px;top:713.3px;color:#fff;">Clear</div>
<div style="left:255px;top:705.6px;width:42.5px;height:42.4px;background:#263445;border-radius:9px;box-shadow:inset 0 0 0 1.5px rgba(110,120,160,0.30);"></div>
<div class="t" style="left:306px;top:713.3px;color:#fff;">Ignore case</div>
<div style="left:472px;top:705.6px;width:42.5px;height:42.4px;background:#263445;border-radius:9px;box-shadow:inset 0 0 0 1.5px rgba(110,120,160,0.30);"></div>
<div class="t" style="left:523px;top:713.3px;color:#fff;">Limit range</div>
<div style="left:2px;top:756px;width:924px;height:1.2px;background:#44464a;"></div>
<div class="clip" style="left:0;top:762px;width:889px;height:1220px">
<div class="t" style="left:51px;top:-14.0px;color:#858583">Group mean:</div>
<div class="t" style="left:221px;top:-14.0px;color:#fff">none</div>
<div class="t" style="left:311px;top:-14.0px;color:#858583">Group median:</div>
<div class="t" style="left:502px;top:-14.0px;color:#fff">none</div>
<div style="left:51px;top:23px;width:30px;height:30px;background:#263445;border-radius:8px;box-shadow:inset 0 0 0 1.5px rgba(110,120,160,0.30);"></div>
<svg style="left:51px;top:23px" width="30" height="30"><path d="M6 15.5 L12 21.5 L24.5 8.5" fill="none" stroke="#4a90f0" stroke-width="3.4"/></svg>
<div style="left:97.5px;top:24px;width:29.5px;height:28.5px;background:#ea504a;border-radius:6px;box-shadow:inset 0 0 0 1.2px rgba(120,120,130,0.55);"></div>
<div class="t" style="left:144px;top:24.0px;color:#fff">Mean time</div>
<div style="left:301.5px;top:24px;width:29.5px;height:28.5px;background:#5aa5f8;border-radius:6px;box-shadow:inset 0 0 0 1.2px rgba(120,120,130,0.55);"></div>
<div class="t" style="left:348.5px;top:24.0px;color:#fff">Median time</div>
<div style="left:51px;top:61px;width:30px;height:30px;background:#263445;border-radius:8px;box-shadow:inset 0 0 0 1.5px rgba(110,120,160,0.30);"></div>
<svg style="left:51px;top:61px" width="30" height="30"><path d="M6 15.5 L12 21.5 L24.5 8.5" fill="none" stroke="#4a90f0" stroke-width="3.4"/></svg>
<div style="left:97.5px;top:62px;width:29.5px;height:28.5px;background:#f2a850;border-radius:6px;box-shadow:inset 0 0 0 1.2px rgba(120,120,130,0.55);"></div>
<div class="t" style="left:144px;top:62.0px;color:#858583">Group mean</div>
<div style="left:322px;top:62px;width:29.5px;height:28.5px;background:#66d858;border-radius:6px;box-shadow:inset 0 0 0 1.2px rgba(120,120,130,0.55);"></div>
<div class="t" style="left:368px;top:62.0px;color:#858583">Group median</div>
<div style="left:51px;top:99px;width:838px;height:400px;background:#3a3934;border:1.2px solid #a6a6a2;"></div>
<svg style="left:51px;top:99px" width="838" height="400"><path d="M2.00 266.0H3.00V399H2.00ZM6.00 266.0H7.00V399H6.00ZM11.00 266.0H12.00V399H11.00ZM12.00 266.0H15.00V399H12.00ZM19.00 266.0H20.00V399H19.00ZM26.00 266.0H27.00V399H26.00ZM29.00 266.0H31.00V399H29.00ZM34.00 266.0H37.00V399H34.00ZM38.00 266.0H39.00V399H38.00ZM39.00 266.0H40.00V399H39.00ZM44.00 266.0H45.00V399H44.00ZM46.00 266.0H48.00V399H46.00ZM52.00 266.0H53.00V399H52.00ZM56.00 266.0H57.00V399H56.00ZM65.00 266.0H71.00V399H65.00ZM71.00 266.0H73.00V399H71.00ZM75.00 266.0H77.00V399H75.00ZM78.00 266.0H81.00V399H78.00ZM86.00 266.0H88.00V399H86.00ZM90.00 266.0H93.00V399H90.00ZM96.00 266.0H97.00V399H96.00ZM99.00 266.0H101.00V399H99.00ZM102.00 266.0H103.00V399H102.00ZM104.00 266.0H105.00V399H104.00ZM108.00 266.0H109.00V399H108.00ZM112.00 266.0H113.00V399H112.00ZM114.00 266.0H115.00V399H114.00ZM119.00 266.0H120.00V399H119.00ZM121.00 266.0H122.00V399H121.00ZM125.00 266.0H131.00V399H125.00ZM131.00 266.0H133.00V399H131.00ZM140.00 266.0H141.00V399H140.00ZM145.00 266.0H146.00V399H145.00ZM151.00 266.0H152.00V399H151.00ZM157.00 266.0H160.00V399H157.00ZM161.00 266.0H162.00V399H161.00ZM172.00 266.0H175.00V399H172.00ZM176.00 266.0H177.00V399H176.00ZM180.00 266.0H181.00V399H180.00ZM186.00 266.0H187.00V399H186.00ZM189.00 266.0H190.00V399H189.00ZM199.00 266.0H200.00V399H199.00ZM201.00 266.0H202.00V399H201.00ZM204.00 266.0H205.00V399H204.00ZM206.00 266.0H207.00V399H206.00ZM208.00 266.0H211.00V399H208.00ZM212.00 266.0H213.00V399H212.00ZM231.00 266.0H236.00V399H231.00ZM240.00 266.0H241.00V399H240.00ZM242.00 266.0H243.00V399H242.00ZM245.00 266.0H247.00V399H245.00ZM250.00 266.0H251.00V399H250.00ZM252.00 266.0H253.00V399H252.00ZM267.00 266.0H269.00V399H267.00ZM271.00 266.0H272.00V399H271.00ZM274.00 266.0H275.00V399H274.00ZM280.00 266.0H281.00V399H280.00ZM289.00 266.0H295.00V399H289.00ZM297.00 266.0H301.00V399H297.00ZM303.00 266.0H304.00V399H303.00ZM305.00 266.0H307.00V399H305.00ZM312.00 266.0H317.00V399H312.00ZM318.00 266.0H319.00V399H318.00ZM321.00 266.0H323.00V399H321.00ZM324.00 266.0H325.00V399H324.00ZM326.00 266.0H327.00V399H326.00ZM333.00 266.0H335.00V399H333.00ZM338.00 266.0H339.00V399H338.00ZM343.00 266.0H344.00V399H343.00ZM347.00 266.0H349.00V399H347.00ZM351.00 266.0H352.00V399H351.00ZM354.00 266.0H356.00V399H354.00ZM357.00 266.0H363.00V399H357.00ZM367.00 266.0H368.00V399H367.00ZM371.00 266.0H374.00V399H371.00ZM375.00 266.0H376.00V399H375.00ZM380.00 266.0H381.00V399H380.00ZM413.00 266.0H414.00V399H413.00ZM415.00 266.0H416.00V399H415.00ZM435.00 266.0H436.00V399H435.00ZM442.00 266.0H443.00V399H442.00ZM448.00 266.0H449.00V399H448.00ZM454.00 266.0H455.00V399H454.00ZM488.00 266.0H489.00V399H488.00ZM491.00 266.0H492.00V399H491.00ZM493.00 266.0H494.00V399H493.00ZM502.00 266.0H503.00V399H502.00ZM517.00 266.0H518.00V399H517.00ZM367.00 266.0H368.00V399H367.00ZM371.00 266.0H374.00V399H371.00ZM375.00 266.0H376.00V399H375.00ZM380.00 266.0H381.00V399H380.00ZM413.00 266.0H414.00V399H413.00ZM415.00 266.0H416.00V399H415.00ZM435.00 266.0H436.00V399H435.00ZM442.00 266.0H443.00V399H442.00ZM448.00 266.0H449.00V399H448.00ZM454.00 266.0H455.00V399H454.00ZM488.00 266.0H489.00V399H488.00ZM490.00 266.0H491.00V399H490.00ZM493.00 266.0H494.00V399H493.00ZM502.00 266.0H503.00V399H502.00ZM517.00 266.0H518.00V399H517.00ZM529.00 266.0H530.00V399H529.00ZM535.00 266.0H536.00V399H535.00ZM538.00 266.0H539.00V399H538.00ZM540.00 266.0H541.00V399H540.00ZM546.00 266.0H547.00V399H546.00ZM549.00 266.0H550.00V399H549.00ZM551.00 266.0H552.00V399H551.00ZM561.00 266.0H562.00V399H561.00ZM581.00 266.0H582.00V399H581.00ZM600.00 266.0H601.00V399H600.00ZM613.00 266.0H614.00V399H613.00ZM650.00 266.0H651.00V399H650.00ZM676.00 266.0H677.00V399H676.00ZM835.00 266.0H836.00V399H835.00ZM14.00 133.5H15.00V399H14.00ZM35.00 133.5H36.00V399H35.00ZM47.00 133.5H48.00V399H47.00ZM50.00 133.5H51.00V399H50.00ZM75.00 133.5H76.00V399H75.00ZM96.00 133.5H97.00V399H96.00ZM99.00 133.5H101.00V399H99.00ZM108.00 133.5H109.00V399H108.00ZM122.00 133.5H123.00V399H122.00ZM126.00 133.5H127.00V399H126.00ZM128.00 133.5H129.00V399H128.00ZM133.00 133.5H134.00V399H133.00ZM157.00 133.5H158.00V399H157.00ZM173.00 133.5H174.00V399H173.00ZM189.00 133.5H190.00V399H189.00ZM204.00 133.5H205.00V399H204.00ZM210.00 133.5H211.00V399H210.00ZM212.00 133.5H213.00V399H212.00ZM231.00 133.5H233.00V399H231.00ZM234.00 133.5H235.00V399H234.00ZM245.00 133.5H246.00V399H245.00ZM252.00 133.5H253.00V399H252.00ZM279.00 133.5H280.00V399H279.00ZM290.00 133.5H291.00V399H290.00ZM292.00 133.5H293.00V399H292.00ZM295.00 133.5H296.00V399H295.00ZM304.00 133.5H305.00V399H304.00ZM308.00 133.5H309.00V399H308.00ZM312.00 133.5H313.00V399H312.00ZM318.00 133.5H319.00V399H318.00ZM326.00 133.5H327.00V399H326.00ZM347.00 133.5H348.00V399H347.00ZM354.00 133.5H355.00V399H354.00ZM359.00 133.5H360.00V399H359.00ZM354.00 133.5H355.00V399H354.00ZM359.00 133.5H360.00V399H359.00ZM65.00 2.0H66.00V399H65.00ZM99.00 2.0H100.00V399H99.00ZM231.00 2.0H232.00V399H231.00ZM268.00 2.0H269.00V399H268.00ZM292.00 2.0H293.00V399H292.00ZM298.00 2.0H299.00V399H298.00ZM302.00 2.0H303.00V399H302.00ZM373.00 2.0H374.00V399H373.00Z" fill="#e0e04f"/><rect x="237.9" y="1" width="1.2" height="398" fill="#5aa5f8"/><rect x="485.9" y="1" width="1.2" height="398" fill="#ea504a"/></svg>
<svg style="left:0;top:501.5px" width="889" height="46"><path d="M66.16 0V7M79.01 0V7M89.87 0V7M99.28 0V7M107.58 0V7M115.00 0V14M163.84 0V7M192.41 0V7M212.68 0V7M228.41 0V7M241.26 0V7M252.12 0V7M261.53 0V7M269.83 0V7M277.25 0V14M326.09 0V7M354.66 0V7M374.93 0V7M390.66 0V7M403.51 0V7M414.37 0V7M423.78 0V7M432.08 0V7M439.50 0V14M488.34 0V7M516.91 0V7M537.18 0V7M552.91 0V7M565.76 0V7M576.62 0V7M586.03 0V7M594.33 0V7M601.75 0V14M650.59 0V7M679.16 0V7M699.43 0V7M715.16 0V7M728.01 0V7M738.87 0V7M748.28 0V7M756.58 0V7M764.00 0V14M812.84 0V7M841.41 0V7M861.68 0V7M877.41 0V7M51.6 0V44M888.4 0V44" stroke="#8b8b86" stroke-width="1.2" fill="none"/></svg>
<div class="t" style="left:114.5px;top:515.5px;color:#858583">100 µs</div>
<div class="t" style="left:276.5px;top:515.5px;color:#858583">1 ms</div>
<div class="t" style="left:438.5px;top:515.5px;color:#858583">10 ms</div>
<div class="t" style="left:600.5px;top:515.5px;color:#858583">100 ms</div>
<div class="t" style="left:763px;top:515.5px;color:#858583">1 s</div>
<div class="t" style="left:50px;top:545.7px;color:#858583">40.54 µs</div>
<div class="t" style="right:0.5px;top:545.7px;color:#858583">5.96 s</div>
<div class="t" style="left:436px;top:545.7px;color:#858583">5.96 s</div>
<svg style="left:401px;top:550px" width="140" height="20"><g fill="#858583" stroke="none"><path d="M0.5 9.5 L10.5 1 V7.8 H28 V11.2 H10.5 V18 Z"/><path d="M138.5 9.5 L128.5 1 V7.8 H111 V11.2 H128.5 V18 Z"/></g></svg>
<div style="left:10px;top:582px;width:879px;height:1.2px;background:#44464a;"></div>
<div style="left:10px;top:590px;width:29px;height:30px;background:#263445;border-radius:8px;box-shadow:inset 0 0 0 1.5px rgba(110,120,160,0.30);"></div>
<div class="t" style="left:47.5px;top:591.5px;color:#fff">Show zone time in frames</div>
<div style="left:10px;top:628.5px;width:879px;height:1.2px;background:#44464a;"></div>
<div class="t" style="left:10px;top:637.5px;color:#fff">Found zones:</div>
<div class="t" style="left:179.5px;top:637.5px;color:#858583">(?)</div>
<div class="t" style="left:10px;top:675.5px;color:#fff">Group by:</div>
<div style="left:140.3px;top:674.8px;width:29.4px;height:29.4px;background:#263445;border-radius:50%;box-shadow:inset 0 0 0 1.5px rgba(110,120,160,0.30);"></div>
<div class="t" style="left:178.5px;top:675.5px;color:#fff">Thread</div>
<div style="left:276.3px;top:674.8px;width:29.4px;height:29.4px;background:#263445;border-radius:50%;box-shadow:inset 0 0 0 1.5px rgba(110,120,160,0.30);"></div>
<div style="left:281.5px;top:680.0px;width:19px;height:19px;background:#4f93f3;border-radius:50%;"></div>
<div class="t" style="left:315px;top:675.5px;color:#fff">User text</div>
<div style="left:436.8px;top:674.8px;width:29.4px;height:29.4px;background:#263445;border-radius:50%;box-shadow:inset 0 0 0 1.5px rgba(110,120,160,0.30);"></div>
<div class="t" style="left:475px;top:675.5px;color:#fff">Zone name</div>
<div style="left:621.8px;top:674.8px;width:29.4px;height:29.4px;background:#263445;border-radius:50%;box-shadow:inset 0 0 0 1.5px rgba(110,120,160,0.30);"></div>
<div class="t" style="left:660px;top:675.5px;color:#fff">Call stacks</div>
<div style="left:798.3px;top:674.8px;width:29.4px;height:29.4px;background:#263445;border-radius:50%;box-shadow:inset 0 0 0 1.5px rgba(110,120,160,0.30);"></div>
<div class="t" style="left:836.5px;top:675.5px;color:#fff">Parent</div>
<div class="t" style="left:10px;top:713.5px;color:#fff">Sort by:</div>
<div style="left:115.3px;top:712.8px;width:29.4px;height:29.4px;background:#263445;border-radius:50%;box-shadow:inset 0 0 0 1.5px rgba(110,120,160,0.30);"></div>
<div class="t" style="left:154px;top:713.5px;color:#fff">Order</div>
<div style="left:237.3px;top:712.8px;width:29.4px;height:29.4px;background:#263445;border-radius:50%;box-shadow:inset 0 0 0 1.5px rgba(110,120,160,0.30);"></div>
<div style="left:242.5px;top:718.0px;width:19px;height:19px;background:#4f93f3;border-radius:50%;"></div>
<div class="t" style="left:276px;top:713.5px;color:#fff">Count</div>
<div style="left:361.3px;top:712.8px;width:29.4px;height:29.4px;background:#263445;border-radius:50%;box-shadow:inset 0 0 0 1.5px rgba(110,120,160,0.30);"></div>
<div class="t" style="left:400px;top:713.5px;color:#fff">Time</div>
<div style="left:473.3px;top:712.8px;width:29.4px;height:29.4px;background:#263445;border-radius:50%;box-shadow:inset 0 0 0 1.5px rgba(110,120,160,0.30);"></div>
<div class="t" style="left:512.5px;top:713.5px;color:#fff">MTPC</div>
<div class="t" style="left:595px;top:713.5px;color:#858583">(?)</div>
<svg style="left:26px;top:758px" width="12" height="14"><path d="M0.5 0.5 V13.5 L11.5 7 Z" fill="#fff"/></svg>
<div class="t" style="left:55px;top:751.0px;color:#fff">(::Type)(Ptr)</div>
<div class="t" style="left:282.5px;top:751.0px;color:#858583">(9) 71.69 ms</div>
<div class="t" style="left:55px;top:781.0px;color:#fff">base.jl:54 in LLVM</div>
<svg style="left:26px;top:826px" width="12" height="14"><path d="M0.5 0.5 V13.5 L11.5 7 Z" fill="#fff"/></svg>
<div class="t" style="left:55px;top:819.0px;color:#fff">eltype(Type)</div>
<div class="t" style="left:441.5px;top:819.0px;color:#858583">(7) 378.54 µs</div>
<div class="t" style="left:55px;top:849.0px;color:#fff">abstractarray.jl:239 in Compiler</div>
<svg style="left:26px;top:894px" width="12" height="14"><path d="M0.5 0.5 V13.5 L11.5 7 Z" fill="#fff"/></svg>
<div class="t" style="left:55px;top:887.0px;letter-spacing:0.33px"><span class="u">_</span>artifact<span class="u">_</span>str(Module, String, SubString, String, Dict, SHA1, Platform, Any</div>
<div class="t" style="left:1100px;top:887.0px;color:#858583">(2) 1.2 ms</div>
<div class="t" style="left:55px;top:917.0px;color:#fff">Artifacts.jl:526 in Artifacts</div>
<svg style="left:26px;top:962px" width="12" height="14"><path d="M0.5 0.5 V13.5 L11.5 7 Z" fill="#fff"/></svg>
<div class="t" style="left:55px;top:955.0px;color:#fff">require(PkgId)</div>
<div class="t" style="left:334px;top:955.0px;color:#858583">(4) 502.36 ms</div>
<div class="t" style="left:55px;top:985.0px;color:#fff">loading.jl:1653 in Base</div>
<svg style="left:26px;top:1030px" width="12" height="14"><path d="M0.5 0.5 V13.5 L11.5 7 Z" fill="#fff"/></svg>
<div class="t" style="left:55px;top:1023.0px;color:#fff"><span class="u">_</span>similar<span class="u">_</span>for(Array, Type, Generator, HasShape, Tuple{OneTo})</div>
<div class="t" style="left:794px;top:1023.0px;color:#858583">(3) 742.25 µs</div>
<div class="t" style="left:55px;top:1053.0px;color:#fff">array.jl:710 in Base</div>
<svg style="left:26px;top:1098px" width="12" height="14"><path d="M0.5 0.5 V13.5 L11.5 7 Z" fill="#fff"/></svg>
<div class="t" style="left:55px;top:1091.0px;color:#fff">getindex(Ok)</div>
<div class="t" style="left:414.5px;top:1091.0px;color:#858583">(2) 3.26 ms</div>
<div class="t" style="left:55px;top:1121.0px;color:#fff">utils.jl:39 in Implementations</div>
<svg style="left:26px;top:1166px" width="12" height="14"><path d="M0.5 0.5 V13.5 L11.5 7 Z" fill="#fff"/></svg>
<div class="t" style="left:55px;top:1159.0px;letter-spacing:-0.4px">(::#23#24)(String)</div>
<div class="t" style="left:365px;top:1159.0px;color:#858583">(2) 13.36 ms</div>
<div class="t" style="left:55px;top:1189.0px;color:#fff">utils.jl:134 in MacroTools</div>
</div>
<div style="left:891px;top:757.5px;width:26px;height:1225px;background:#1f1f1b;"></div>
<div style="left:893px;top:804px;width:22px;height:108px;background:#4f4f4f;border-radius:11px;"></div>
<svg style="left:899px;top:1960px;" width="34" height="34" viewBox="0 0 34 34"><path d="M34 0 V34 H0 Z" fill="#28344a"/></svg>
<div style="left:0px;top:1999.5px;width:2534px;height:3px;background:#50534e;"></div>
<div style="left:958px;top:638px;width:1580px;height:1222px;background:#1b1b17;border:2px solid #3f4147;"></div>
<div style="left:960px;top:640px;width:1576px;height:38px;background:#0a0a0a;"></div>
<div style="left:960px;top:678px;width:1576px;height:1.5px;background:#33353b;"></div>
<svg style="left:973px;top:650px;" width="21" height="18" viewBox="0 0 21 18"><path d="M0.5 0.5 H20.5 L10.5 17.5 Z" fill="#fff"/></svg>
<div class="t" style="left:1006.5px;top:645.5px;color:#fff;">Statistics</div>
<svg style="left:2511px;top:649px;" width="21" height="21" viewBox="0 0 21 21"><path d="M1 1 L20 20 M20 1 L1 20" stroke="#fff" stroke-width="1.4" fill="none"/></svg>
<div style="left:974.5px;top:696.5px;width:33px;height:33px;background:#263445;border-radius:50%;box-shadow:inset 0 0 0 1.5px rgba(110,120,160,0.30);"></div>
<div style="left:979.5px;top:701.5px;width:23px;height:23px;background:#4f93f3;border-radius:50%;"></div>
<svg style="left:1016px;top:699px" width="29" height="29" viewBox="0 0 28 28" preserveAspectRatio="none"><g transform="rotate(45 14 14)" fill="#fff"><path fill-rule="evenodd" d="M8.7 6.4 H19.3 V20 L16.2 24.6 H11.8 L8.7 20 Z M15.2 10.4 V12.2 H19.3 V10.4 Z M15.2 14.6 V16.4 H19.3 V14.6 Z"/><rect x="6.4" y="4.4" width="15.2" height="3" rx="1.4"/><rect x="12.5" y="-1" width="3" height="6"/><rect x="8.8" y="-3.4" width="10.4" height="3" rx="1.4"/><rect x="12.9" y="24" width="2.2" height="9" rx="1"/></g></svg>
<div class="t" style="left:1051.5px;top:699.0px;color:#fff;">Instrumentation</div>
<div style="left:1274px;top:696px;width:1.2px;height:34px;background:#4a4c50;"></div>
<div class="t" style="left:1307px;top:699.0px;color:#858583;">Total zone count:</div>
<div class="t" style="left:1524.5px;top:699.0px;color:#fff;">31</div>
<div class="t" style="left:1584.5px;top:699.0px;color:#858583;">Visible zones:</div>
<div class="t" style="left:1758.5px;top:699.0px;color:#fff;">31</div>
<div class="t" style="left:1818.5px;top:699.0px;color:#fff;">Timing</div>
<div style="left:1913px;top:696px;width:227px;height:34px;background:#263445;border-radius:8px;box-shadow:inset 0 0 0 1.5px rgba(110,120,160,0.30);"></div>
<div style="left:2106px;top:696px;width:34px;height:34px;background:#31486d;border-radius:0 8px 8px 0;"></div>
<svg style="left:2113px;top:704px;" width="21" height="18" viewBox="0 0 21 18"><path d="M0.5 0.5 H20.5 L10.5 17.5 Z" fill="#fff"/></svg>
<div class="t" style="left:1916px;top:699.0px;color:#fff;">Self only</div>
<div style="left:966px;top:737.5px;width:1568px;height:1.2px;background:#44464a;"></div>
<div class="t" style="left:975px;top:749.0px;color:#858583;">Filter results</div>
<div style="left:1136.5px;top:746px;width:200px;height:34px;background:#263445;border-radius:9px;box-shadow:inset 0 0 0 1.5px rgba(110,120,160,0.30);"></div>
<svg style="left:1344px;top:749.5px" width="29" height="26" viewBox="0 0 29 26" preserveAspectRatio="none"><path fill="#fff" d="M1.5 1 H27 Q28.6 1 27.6 2.4 L17.6 13.4 V24.4 Q17.6 25.6 16.6 24.8 L11.4 20.6 V13.4 L1 2.4 Q0 1 1.5 1 Z"/></svg>
<div class="btn" style="left:1388.5px;top:746px;width:103.5px;height:34px;background:#344e72"></div>
<svg style="left:1391px;top:752px" width="32" height="21.5" viewBox="0 0 32.5 22" preserveAspectRatio="none"><path fill-rule="evenodd" fill="#fff" d="M10 1 H30 Q32 1 32 3 V19 Q32 21 30 21 H10 Q9 21 8.2 20.2 L0.6 12 Q-0.2 11 0.6 10 L8.2 1.8 Q9 1 10 1 Z M14.8 6 L13.2 7.6 L16.6 11 L13.2 14.4 L14.8 16 L18.2 12.6 L21.6 16 L23.2 14.4 L19.8 11 L23.2 7.6 L21.6 6 L18.2 9.4 Z"/></svg>
<svg style="left:1398px;top:755px;" width="16" height="16" viewBox="0 0 16 16"></svg>
<div class="t" style="left:1430px;top:749.0px;color:#fff;">Clear</div>
<div style="left:1524px;top:746px;width:34px;height:34px;background:#263445;border-radius:9px;box-shadow:inset 0 0 0 1.5px rgba(110,120,160,0.30);"></div>
<div class="t" style="left:1567px;top:749.0px;color:#fff;">Limit range</div>
<div style="left:966px;top:787.5px;width:1568px;height:1.2px;background:#44464a;"></div>
<div style="left:974px;top:796.5px;width:1528.5px;height:37.5px;background:#303033;"></div>
<div style="left:1382px;top:796.5px;width:1.2px;height:1047.5px;background:#3a3b40;"></div>
<div style="left:2018.5px;top:796.5px;width:1.2px;height:1047.5px;background:#3a3b40;"></div>
<div style="left:2256.5px;top:796.5px;width:1.2px;height:1047.5px;background:#3a3b40;"></div>
<div style="left:2383px;top:796.5px;width:1.2px;height:1047.5px;background:#3a3b40;"></div>
<div class="t" style="left:975px;top:801.5px;color:#fff;">Name</div>
<div class="t" style="left:1391px;top:801.5px;color:#fff;">Location</div>
<div class="t" style="left:2027.5px;top:801.5px;color:#fff;">Total time</div>
<div class="t" style="left:2266px;top:801.5px;color:#fff;">Counts</div>
<div class="t" style="left:2392px;top:801.5px;color:#fff;">MTPC</div>
<svg style="left:2238px;top:804.5px;" width="14" height="11" viewBox="0 0 14 11"><path d="M0.5 0.5 H13.5 L7 10.5 Z" fill="#fff"/></svg>
<div class="clip" style="left:974px;top:834px;width:1528.5px;height:1010px">
<div style="left:0.5px;top:4.899999999999977px;width:29.5px;height:29.5px;background:#7aaa68;border-radius:6px;box-shadow:inset 0 0 0 1.2px rgba(90,90,100,0.6)"></div>
<div class="t" style="left:45px;top:5.399999999999977px;letter-spacing:0.5px">VERIFY<span class="u">_</span>Edges</div>
<div class="t" style="left:417px;top:5.399999999999977px;color:#858583">/home/kristofferc/julia/src/staticdata<span class="u">_</span>utils.c:839</div>
<div class="t" style="left:1052.5px;top:5.399999999999977px;color:#fff">18.1 s<span style="color:#858583;letter-spacing:-0.3px">  (28.62%)</span></div>
<div class="t" style="left:1290.5px;top:5.399999999999977px;letter-spacing:0.13px">527</div>
<div class="t" style="left:1416.5px;top:5.399999999999977px;letter-spacing:0.03px">34.35 ms</div>
<div style="left:0.5px;top:42.89999999999998px;width:29.5px;height:29.5px;background:#8f63a8;border-radius:6px;box-shadow:inset 0 0 0 1.2px rgba(90,90,100,0.6)"></div>
<div class="t" style="left:45px;top:43.39999999999998px;letter-spacing:0.95px">ADD<span class="u">_</span>METHOD</div>
<div class="t" style="left:417px;top:43.39999999999998px;color:#858583">/home/kristofferc/julia/src/gf.c:1986</div>
<div class="t" style="left:1052.5px;top:43.39999999999998px;color:#fff">13.79 s<span style="color:#858583;letter-spacing:-0.3px">  (21.80%)</span></div>
<div class="t" style="left:1290.5px;top:43.39999999999998px;letter-spacing:0.13px">84,539</div>
<div class="t" style="left:1416.5px;top:43.39999999999998px;letter-spacing:0.03px">163.1 µs</div>
<div style="left:0.5px;top:80.89999999999998px;width:29.5px;height:29.5px;background:#9aab67;border-radius:6px;box-shadow:inset 0 0 0 1.2px rgba(90,90,100,0.6)"></div>
<div class="t" style="left:45px;top:81.39999999999998px;letter-spacing:0.95px">LLVM<span class="u">_</span>ORC</div>
<div class="t" style="left:417px;top:81.39999999999998px;color:#858583">/home/kristofferc/julia/src/jitlayers.cpp:1444</div>
<div class="t" style="left:1052.5px;top:81.39999999999998px;color:#fff">10.73 s<span style="color:#858583;letter-spacing:-0.3px">  (16.96%)</span></div>
<div class="t" style="left:1290.5px;top:81.39999999999998px;letter-spacing:0.13px">831</div>
<div class="t" style="left:1416.5px;top:81.39999999999998px;letter-spacing:0.03px">12.91 ms</div>
<div style="left:0;top:114.39999999999998px;width:1528.5px;height:38px;background:#29384e"></div>
<div style="left:408px;top:114.39999999999998px;width:1.2px;height:38px;background:#3a4560"></div>
<div style="left:1044.5px;top:114.39999999999998px;width:1.2px;height:38px;background:#3a4560"></div>
<div style="left:1282.5px;top:114.39999999999998px;width:1.2px;height:38px;background:#3a4560"></div>
<div style="left:1409px;top:114.39999999999998px;width:1.2px;height:38px;background:#3a4560"></div>
<div style="left:0.5px;top:118.89999999999998px;width:29.5px;height:29.5px;background:#a88165;border-radius:6px;box-shadow:inset 0 0 0 1.2px rgba(90,90,100,0.6)"></div>
<div class="t" style="left:45px;top:119.39999999999998px;letter-spacing:0.95px">INFERENCE</div>
<div class="t" style="left:417px;top:119.39999999999998px;color:#858583">/home/kristofferc/julia/src/gf.c:347</div>
<div class="t" style="left:1052.5px;top:119.39999999999998px;color:#fff">8.79 s<span style="color:#858583;letter-spacing:-0.3px">  (13.90%)</span></div>
<div class="t" style="left:1290.5px;top:119.39999999999998px;letter-spacing:0.13px">218</div>
<div class="t" style="left:1416.5px;top:119.39999999999998px;letter-spacing:0.03px">40.32 ms</div>
<div style="left:0.5px;top:156.89999999999998px;width:29.5px;height:29.5px;background:#83a865;border-radius:6px;box-shadow:inset 0 0 0 1.2px rgba(90,90,100,0.6)"></div>
<div class="t" style="left:45px;top:157.39999999999998px;letter-spacing:0.95px">LLVM<span class="u">_</span>OPT</div>
<div class="t" style="left:417px;top:157.39999999999998px;color:#858583">/home/kristofferc/julia/src/jitlayers.cpp:1200</div>
<div class="t" style="left:1052.5px;top:157.39999999999998px;color:#fff">6.41 s<span style="color:#858583;letter-spacing:-0.3px">  (10.14%)</span></div>
<div class="t" style="left:1290.5px;top:157.39999999999998px;letter-spacing:0.13px">831</div>
<div class="t" style="left:1416.5px;top:157.39999999999998px;letter-spacing:0.03px">7.72 ms</div>
<div style="left:0.5px;top:194.9000000000001px;width:29.5px;height:29.5px;background:#a89666;border-radius:6px;box-shadow:inset 0 0 0 1.2px rgba(90,90,100,0.6)"></div>
<div class="t" style="left:45px;top:195.4000000000001px;letter-spacing:0.5px">LOAD<span class="u">_</span>Pkgimg</div>
<div class="t" style="left:417px;top:195.4000000000001px;color:#858583">/home/kristofferc/julia/src/staticdata.c:3197</div>
<div class="t" style="left:1052.5px;top:195.4000000000001px;color:#fff">2.8 s<span style="color:#858583;letter-spacing:-0.3px">  (4.43%)</span></div>
<div class="t" style="left:1290.5px;top:195.4000000000001px;letter-spacing:0.13px">527</div>
<div class="t" style="left:1416.5px;top:195.4000000000001px;letter-spacing:0.03px">5.32 ms</div>
<div style="left:0.5px;top:232.9000000000001px;width:29.5px;height:29.5px;background:#9bab67;border-radius:6px;box-shadow:inset 0 0 0 1.2px rgba(90,90,100,0.6)"></div>
<div class="t" style="left:45px;top:233.4000000000001px;letter-spacing:0.5px">GC<span class="u">_</span>Mark</div>
<div class="t" style="left:417px;top:233.4000000000001px;color:#858583">/home/kristofferc/julia/src/gc.c:3046</div>
<div class="t" style="left:1052.5px;top:233.4000000000001px;color:#fff">1.84 s<span style="color:#858583;letter-spacing:-0.3px">  (2.91%)</span></div>
<div class="t" style="left:1290.5px;top:233.4000000000001px;letter-spacing:0.13px">98</div>
<div class="t" style="left:1416.5px;top:233.4000000000001px;letter-spacing:0.03px">18.76 ms</div>
<div style="left:0.5px;top:270.9000000000001px;width:29.5px;height:29.5px;background:#9fab67;border-radius:6px;box-shadow:inset 0 0 0 1.2px rgba(90,90,100,0.6)"></div>
<div class="t" style="left:45px;top:271.4000000000001px;letter-spacing:0.5px">GC<span class="u">_</span>Sweep</div>
<div class="t" style="left:417px;top:271.4000000000001px;color:#858583">/home/kristofferc/julia/src/gc.c:3207</div>
<div class="t" style="left:1052.5px;top:271.4000000000001px;color:#fff">898.65 ms<span style="color:#858583;letter-spacing:-0.3px">  (1.42%)</span></div>
<div class="t" style="left:1290.5px;top:271.4000000000001px;letter-spacing:0.13px">98</div>
<div class="t" style="left:1416.5px;top:271.4000000000001px;letter-spacing:0.03px">9.17 ms</div>
<div style="left:0.5px;top:308.9000000000001px;width:29.5px;height:29.5px;background:#8f63a8;border-radius:6px;box-shadow:inset 0 0 0 1.2px rgba(90,90,100,0.6)"></div>
<div class="t" style="left:45px;top:309.4000000000001px;letter-spacing:0.95px">CODEGEN<span class="u">_</span>LLVM</div>
<div class="t" style="left:417px;top:309.4000000000001px;color:#858583">/home/kristofferc/julia/src/codegen.cpp:8438</div>
<div class="t" style="left:1052.5px;top:309.4000000000001px;color:#fff">527.71 ms<span style="color:#858583;letter-spacing:-0.3px">  (0.83%)</span></div>
<div class="t" style="left:1290.5px;top:309.4000000000001px;letter-spacing:0.13px">946</div>
<div class="t" style="left:1416.5px;top:309.4000000000001px;letter-spacing:0.03px">557.83 µs</div>
<div style="left:0.5px;top:346.9000000000001px;width:29.5px;height:29.5px;background:#75a867;border-radius:6px;box-shadow:inset 0 0 0 1.2px rgba(90,90,100,0.6)"></div>
<div class="t" style="left:45px;top:347.4000000000001px;letter-spacing:0.95px">INIT<span class="u">_</span>MODULE</div>
<div class="t" style="left:417px;top:347.4000000000001px;color:#858583">/home/kristofferc/julia/src/toplevel.c:67</div>
<div class="t" style="left:1052.5px;top:347.4000000000001px;color:#fff">238.09 ms<span style="color:#858583;letter-spacing:-0.3px">  (0.38%)</span></div>
<div class="t" style="left:1290.5px;top:347.4000000000001px;letter-spacing:0.13px">158</div>
<div class="t" style="left:1416.5px;top:347.4000000000001px;letter-spacing:0.03px">1.51 ms</div>
<div style="left:0.5px;top:384.9000000000001px;width:29.5px;height:29.5px;background:#6b81a8;border-radius:6px;box-shadow:inset 0 0 0 1.2px rgba(90,90,100,0.6)"></div>
<div class="t" style="left:45px;top:385.4000000000001px;letter-spacing:0.95px">LOWERING</div>
<div class="t" style="left:417px;top:385.4000000000001px;color:#858583">/home/kristofferc/julia/src/ast.c:1193</div>
<div class="t" style="left:1052.5px;top:385.4000000000001px;color:#fff">235.65 ms<span style="color:#858583;letter-spacing:-0.3px">  (0.37%)</span></div>
<div class="t" style="left:1290.5px;top:385.4000000000001px;letter-spacing:0.13px">280</div>
<div class="t" style="left:1416.5px;top:385.4000000000001px;letter-spacing:0.03px">841.59 µs</div>
<div style="left:0.5px;top:422.9000000000001px;width:29.5px;height:29.5px;background:#70a89b;border-radius:6px;box-shadow:inset 0 0 0 1.2px rgba(90,90,100,0.6)"></div>
<div class="t" style="left:45px;top:423.4000000000001px;letter-spacing:0.95px">LOWERING</div>
<div class="t" style="left:417px;top:423.4000000000001px;color:#858583">/home/kristofferc/julia/src/ast.c:1241</div>
<div class="t" style="left:1052.5px;top:423.4000000000001px;color:#fff">79.02 ms<span style="color:#858583;letter-spacing:-0.3px">  (0.12%)</span></div>
<div class="t" style="left:1290.5px;top:423.4000000000001px;letter-spacing:0.13px">221</div>
<div class="t" style="left:1416.5px;top:423.4000000000001px;letter-spacing:0.03px">357.58 µs</div>
<div style="left:0.5px;top:460.9000000000001px;width:29.5px;height:29.5px;background:#7aaa67;border-radius:6px;box-shadow:inset 0 0 0 1.2px rgba(90,90,100,0.6)"></div>
<div class="t" style="left:45px;top:461.4000000000001px;letter-spacing:0.95px">TYPE<span class="u">_</span>CACHE<span class="u">_</span>INSERT</div>
<div class="t" style="left:417px;top:461.4000000000001px;color:#858583">/home/kristofferc/julia/src/jltypes.c:1178</div>
<div class="t" style="left:1052.5px;top:461.4000000000001px;color:#fff">70.22 ms<span style="color:#858583;letter-spacing:-0.3px">  (0.11%)</span></div>
<div class="t" style="left:1290.5px;top:461.4000000000001px;letter-spacing:0.13px">278,142</div>
<div class="t" style="left:1416.5px;top:461.4000000000001px;letter-spacing:0.03px">252 ns</div>
<div style="left:0.5px;top:498.9000000000001px;width:29.5px;height:29.5px;background:#6b80a8;border-radius:6px;box-shadow:inset 0 0 0 1.2px rgba(90,90,100,0.6)"></div>
<div class="t" style="left:45px;top:499.4000000000001px;letter-spacing:0.5px">LOAD<span class="u">_</span>Sysimg</div>
<div class="t" style="left:417px;top:499.4000000000001px;color:#858583">/home/kristofferc/julia/src/staticdata.c:3268</div>
<div class="t" style="left:1052.5px;top:499.4000000000001px;color:#fff">69.33 ms<span style="color:#858583;letter-spacing:-0.3px">  (0.11%)</span></div>
<div class="t" style="left:1290.5px;top:499.4000000000001px;letter-spacing:0.13px">1</div>
<div class="t" style="left:1416.5px;top:499.4000000000001px;letter-spacing:0.03px">69.33 ms</div>
<div style="left:0.5px;top:536.9000000000001px;width:29.5px;height:29.5px;background:#6b99a8;border-radius:6px;box-shadow:inset 0 0 0 1.2px rgba(90,90,100,0.6)"></div>
<div class="t" style="left:45px;top:537.4000000000001px;letter-spacing:0.95px">PARSING</div>
<div class="t" style="left:417px;top:537.4000000000001px;color:#858583">/home/kristofferc/julia/src/ast.c:786</div>
<div class="t" style="left:1052.5px;top:537.4000000000001px;color:#fff">58.9 ms<span style="color:#858583;letter-spacing:-0.3px">  (0.09%)</span></div>
<div class="t" style="left:1290.5px;top:537.4000000000001px;letter-spacing:0.13px">20</div>
<div class="t" style="left:1416.5px;top:537.4000000000001px;letter-spacing:0.03px">2.94 ms</div>
<div style="left:0.5px;top:574.9000000000001px;width:29.5px;height:29.5px;background:#70a895;border-radius:6px;box-shadow:inset 0 0 0 1.2px rgba(90,90,100,0.6)"></div>
<div class="t" style="left:45px;top:575.4000000000001px;letter-spacing:0.5px">CODEGEN<span class="u">_</span>Codeinst</div>
<div class="t" style="left:417px;top:575.4000000000001px;color:#858583">/home/kristofferc/julia/src/codegen.cpp:8481</div>
<div class="t" style="left:1052.5px;top:575.4000000000001px;color:#fff">46.06 ms<span style="color:#858583;letter-spacing:-0.3px">  (0.07%)</span></div>
<div class="t" style="left:1290.5px;top:575.4000000000001px;letter-spacing:0.13px">947</div>
<div class="t" style="left:1416.5px;top:575.4000000000001px;letter-spacing:0.03px">48.63 µs</div>
<div style="left:0.5px;top:612.9000000000001px;width:29.5px;height:29.5px;background:#8365a8;border-radius:6px;box-shadow:inset 0 0 0 1.2px rgba(90,90,100,0.6)"></div>
<div class="t" style="left:45px;top:613.4000000000001px;letter-spacing:0.5px">VERIFY<span class="u">_</span>Graph</div>
<div class="t" style="left:417px;top:613.4000000000001px;color:#858583">/home/kristofferc/julia/src/staticdata<span class="u">_</span>utils.c:1054</div>
<div class="t" style="left:1052.5px;top:613.4000000000001px;color:#fff">31.32 ms<span style="color:#858583;letter-spacing:-0.3px">  (0.05%)</span></div>
<div class="t" style="left:1290.5px;top:613.4000000000001px;letter-spacing:0.13px">527</div>
<div class="t" style="left:1416.5px;top:613.4000000000001px;letter-spacing:0.03px">59.44 µs</div>
<div style="left:0.5px;top:650.9000000000001px;width:29.5px;height:29.5px;background:#a8657b;border-radius:6px;box-shadow:inset 0 0 0 1.2px rgba(90,90,100,0.6)"></div>
<div class="t" style="left:45px;top:651.4000000000001px;letter-spacing:0.95px">DL<span class="u">_</span>OPEN</div>
<div class="t" style="left:417px;top:651.4000000000001px;color:#858583">/home/kristofferc/julia/src/dlload.c:281</div>
<div class="t" style="left:1052.5px;top:651.4000000000001px;color:#fff">29.6 ms<span style="color:#858583;letter-spacing:-0.3px">  (0.05%)</span></div>
<div class="t" style="left:1290.5px;top:651.4000000000001px;letter-spacing:0.13px">164</div>
<div class="t" style="left:1416.5px;top:651.4000000000001px;letter-spacing:0.03px">180.47 µs</div>
<div style="left:0.5px;top:688.9000000000001px;width:29.5px;height:29.5px;background:#8aaa63;border-radius:6px;box-shadow:inset 0 0 0 1.2px rgba(90,90,100,0.6)"></div>
<div class="t" style="left:45px;top:689.4000000000001px;letter-spacing:0.95px">CODEINST<span class="u">_</span>COMPILE</div>
<div class="t" style="left:417px;top:689.4000000000001px;color:#858583">/home/kristofferc/julia/src/jitlayers.cpp:196</div>
<div class="t" style="left:1052.5px;top:689.4000000000001px;color:#fff">20.92 ms<span style="color:#858583;letter-spacing:-0.3px">  (0.03%)</span></div>
<div class="t" style="left:1290.5px;top:689.4000000000001px;letter-spacing:0.13px">431</div>
<div class="t" style="left:1416.5px;top:689.4000000000001px;letter-spacing:0.03px">48.54 µs</div>
<div style="left:0.5px;top:726.9000000000001px;width:29.5px;height:29.5px;background:#6b99a8;border-radius:6px;box-shadow:inset 0 0 0 1.2px rgba(90,90,100,0.6)"></div>
<div class="t" style="left:45px;top:727.4000000000001px;letter-spacing:0.5px">VERIFY<span class="u">_</span>Methods</div>
<div class="t" style="left:417px;top:727.4000000000001px;color:#858583">/home/kristofferc/julia/src/staticdata<span class="u">_</span>utils.c:940</div>
<div class="t" style="left:1052.5px;top:727.4000000000001px;color:#fff">16.44 ms<span style="color:#858583;letter-spacing:-0.3px">  (0.03%)</span></div>
<div class="t" style="left:1290.5px;top:727.4000000000001px;letter-spacing:0.13px">527</div>
<div class="t" style="left:1416.5px;top:727.4000000000001px;letter-spacing:0.03px">31.19 µs</div>
<div style="left:0.5px;top:764.9000000000001px;width:29.5px;height:29.5px;background:#a065a8;border-radius:6px;box-shadow:inset 0 0 0 1.2px rgba(90,90,100,0.6)"></div>
<div class="t" style="left:45px;top:765.4000000000001px;letter-spacing:0.95px">MACRO<span class="u">_</span>INVOCATION</div>
<div class="t" style="left:417px;top:765.4000000000001px;color:#858583">/home/kristofferc/julia/src/ast.c:1004</div>
<div class="t" style="left:1052.5px;top:765.4000000000001px;color:#fff">15.43 ms<span style="color:#858583;letter-spacing:-0.3px">  (0.02%)</span></div>
<div class="t" style="left:1290.5px;top:765.4000000000001px;letter-spacing:0.13px">71</div>
<div class="t" style="left:1416.5px;top:765.4000000000001px;letter-spacing:0.03px">217.32 µs</div>
<div style="left:0.5px;top:802.9000000000001px;width:29.5px;height:29.5px;background:#6b9ba8;border-radius:6px;box-shadow:inset 0 0 0 1.2px rgba(90,90,100,0.6)"></div>
<div class="t" style="left:45px;top:803.4000000000001px;letter-spacing:0.95px">GC</div>
<div class="t" style="left:417px;top:803.4000000000001px;color:#858583">/home/kristofferc/julia/src/gc.c:3354</div>
<div class="t" style="left:1052.5px;top:803.4000000000001px;color:#fff">9.16 ms<span style="color:#858583;letter-spacing:-0.3px">  (0.01%)</span></div>
<div class="t" style="left:1290.5px;top:803.4000000000001px;letter-spacing:0.13px">98</div>
<div class="t" style="left:1416.5px;top:803.4000000000001px;letter-spacing:0.03px">93.51 µs</div>
<div style="left:0.5px;top:840.9000000000001px;width:29.5px;height:29.5px;background:#6ba889;border-radius:6px;box-shadow:inset 0 0 0 1.2px rgba(90,90,100,0.6)"></div>
<div class="t" style="left:45px;top:841.4000000000001px;letter-spacing:0.95px">METHOD<span class="u">_</span>LOOKUP<span class="u">_</span>SLOW</div>
<div class="t" style="left:417px;top:841.4000000000001px;color:#858583">/home/kristofferc/julia/src/gf.c:3036</div>
<div class="t" style="left:1052.5px;top:841.4000000000001px;color:#fff">5.89 ms<span style="color:#858583;letter-spacing:-0.3px">  (0.01%)</span></div>
<div class="t" style="left:1290.5px;top:841.4000000000001px;letter-spacing:0.13px">288</div>
<div class="t" style="left:1416.5px;top:841.4000000000001px;letter-spacing:0.03px">20.44 µs</div>
<div style="left:0.5px;top:878.9000000000001px;width:29.5px;height:29.5px;background:#a8a165;border-radius:6px;box-shadow:inset 0 0 0 1.2px rgba(90,90,100,0.6)"></div>
<div class="t" style="left:45px;top:879.4000000000001px;letter-spacing:0.5px">LOAD<span class="u">_</span>Processor</div>
<div class="t" style="left:417px;top:879.4000000000001px;color:#858583">/home/kristofferc/julia/src/processor.cpp:632</div>
<div class="t" style="left:1052.5px;top:879.4000000000001px;color:#fff">3.96 ms<span style="color:#858583;letter-spacing:-0.3px">  (0.01%)</span></div>
<div class="t" style="left:1290.5px;top:879.4000000000001px;letter-spacing:0.13px">528</div>
<div class="t" style="left:1416.5px;top:879.4000000000001px;letter-spacing:0.03px">7.49 µs</div>
<div style="left:0.5px;top:916.9000000000001px;width:29.5px;height:29.5px;background:#a8659b;border-radius:6px;box-shadow:inset 0 0 0 1.2px rgba(90,90,100,0.6)"></div>
<div class="t" style="left:45px;top:917.4000000000001px;letter-spacing:0.5px">CODEGEN<span class="u">_</span>Workqueue</div>
<div class="t" style="left:417px;top:917.4000000000001px;color:#858583">/home/kristofferc/julia/src/codegen.cpp:8561</div>
<div class="t" style="left:1052.5px;top:917.4000000000001px;color:#fff">3.49 ms<span style="color:#858583;letter-spacing:-0.3px">  (0.01%)</span></div>
<div class="t" style="left:1290.5px;top:917.4000000000001px;letter-spacing:0.13px">432</div>
<div class="t" style="left:1416.5px;top:917.4000000000001px;letter-spacing:0.03px">8.08 µs</div>
<div style="left:0.5px;top:954.9000000000001px;width:29.5px;height:29.5px;background:#9965a8;border-radius:6px;box-shadow:inset 0 0 0 1.2px rgba(90,90,100,0.6)"></div>
<div class="t" style="left:45px;top:955.4000000000001px;letter-spacing:0.95px">LOWERING</div>
<div class="t" style="left:417px;top:955.4000000000001px;color:#858583">/home/kristofferc/julia/src/ast.c:1180</div>
<div class="t" style="left:1052.5px;top:955.4000000000001px;color:#fff">2.87 ms<span style="color:#858583;letter-spacing:-0.3px">  (0.00%)</span></div>
<div class="t" style="left:1290.5px;top:955.4000000000001px;letter-spacing:0.13px">12</div>
<div class="t" style="left:1416.5px;top:955.4000000000001px;letter-spacing:0.03px">238.87 µs</div>
<div style="left:0.5px;top:992.9000000000001px;width:29.5px;height:29.5px;background:#7b65a8;border-radius:6px;box-shadow:inset 0 0 0 1.2px rgba(90,90,100,0.6)"></div>
<div class="t" style="left:45px;top:993.4000000000001px;letter-spacing:0.95px">STAGED<span class="u">_</span>FUNCTION</div>
<div class="t" style="left:417px;top:993.4000000000001px;color:#858583">/home/kristofferc/julia/src/method.c:567</div>
<div class="t" style="left:1052.5px;top:993.4000000000001px;color:#fff">210.49 µs<span style="color:#858583;letter-spacing:-0.3px">  (0.00%)</span></div>
<div class="t" style="left:1290.5px;top:993.4000000000001px;letter-spacing:0.13px">12</div>
<div class="t" style="left:1416.5px;top:993.4000000000001px;letter-spacing:0.03px">17.54 µs</div>
</div>
<div style="left:2502.5px;top:796.5px;width:28px;height:1047.5px;background:#22221d;"></div>
<div style="left:2505.5px;top:799px;width:22px;height:896px;background:#4f4f4f;border-radius:11px;"></div>
<svg style="left:2512px;top:1838px;" width="22" height="20" viewBox="0 0 22 20"><path d="M22 0 V20 H0 Z" fill="#2b3c58"/></svg>
</div></body></html>
